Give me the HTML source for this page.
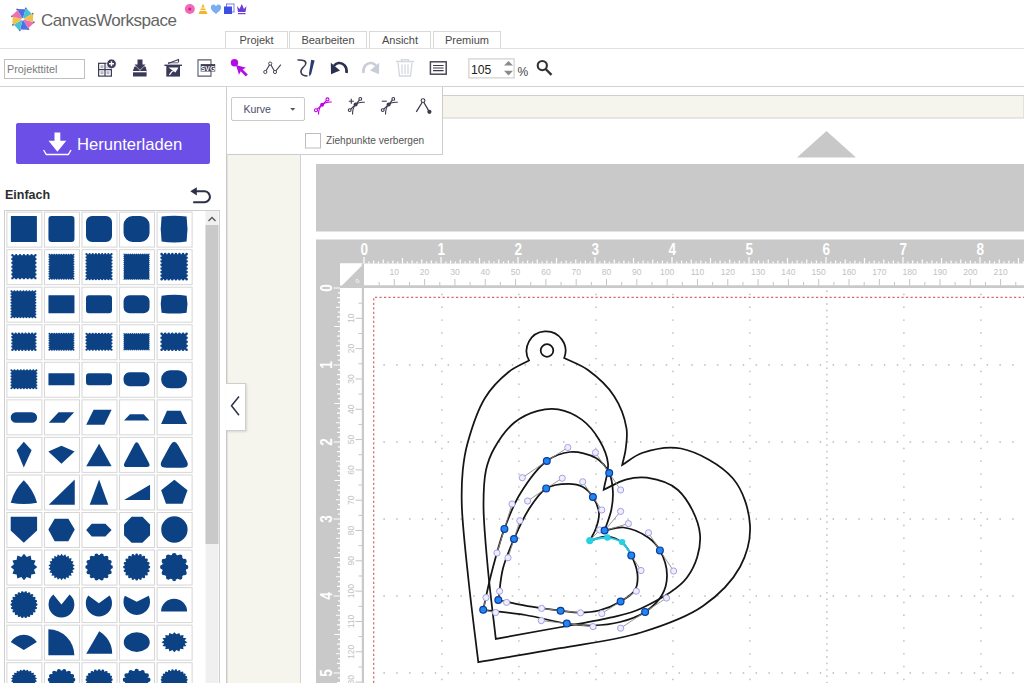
<!DOCTYPE html>
<html><head><meta charset="utf-8">
<style>
*{margin:0;padding:0;box-sizing:border-box}
html,body{width:1024px;height:683px;overflow:hidden;background:#fff;font-family:"Liberation Sans",sans-serif;position:relative}
.a{position:absolute}
.tab{position:absolute;top:31px;height:18px;border:1px solid #d9d9d9;border-bottom:none;background:#fff;font-size:11px;color:#4a4a4a;text-align:center;line-height:16.5px}
.t{position:absolute;white-space:nowrap}
</style></head><body>
<svg class="a" style="left:0;top:0" width="1024" height="683" viewBox="0 0 1024 683">
<rect x="227" y="87" width="797" height="596" fill="#fff"/>
<rect x="227" y="95.5" width="797" height="590" fill="#f6f5ed" stroke="#cfcfcf" stroke-width="1"/>
<rect x="300.5" y="118" width="724" height="566" fill="#fff" stroke="#d2d2d2" stroke-width="1"/>
<polygon points="797,157.5 826.5,131 856,157.5" fill="#c8c8c8"/>
<rect x="316" y="164" width="708" height="67.5" fill="#c9c9c9"/>
<rect x="316" y="239.5" width="708" height="444" fill="#c9c9c9"/>
<rect x="340" y="263.5" width="684" height="22" fill="#fff"/>
<rect x="340" y="263.5" width="22" height="420" fill="#fff"/>
<polygon points="340,287.5 364,263.5 364,287.5" fill="#c9c9c9"/>
<rect x="364" y="288" width="660" height="395" fill="#fff"/>
<path d="M364.00 257.00V263.5M368.81 261.50V263.5M373.62 260.50V263.5M378.44 261.50V263.5M383.25 259.50V263.5M388.06 261.50V263.5M392.88 260.50V263.5M397.69 261.50V263.5M402.50 258.00V263.5M407.31 261.50V263.5M412.12 260.50V263.5M416.94 261.50V263.5M421.75 259.50V263.5M426.56 261.50V263.5M431.38 260.50V263.5M436.19 261.50V263.5M441.00 257.00V263.5M445.81 261.50V263.5M450.62 260.50V263.5M455.44 261.50V263.5M460.25 259.50V263.5M465.06 261.50V263.5M469.88 260.50V263.5M474.69 261.50V263.5M479.50 258.00V263.5M484.31 261.50V263.5M489.12 260.50V263.5M493.94 261.50V263.5M498.75 259.50V263.5M503.56 261.50V263.5M508.38 260.50V263.5M513.19 261.50V263.5M518.00 257.00V263.5M522.81 261.50V263.5M527.62 260.50V263.5M532.44 261.50V263.5M537.25 259.50V263.5M542.06 261.50V263.5M546.88 260.50V263.5M551.69 261.50V263.5M556.50 258.00V263.5M561.31 261.50V263.5M566.12 260.50V263.5M570.94 261.50V263.5M575.75 259.50V263.5M580.56 261.50V263.5M585.38 260.50V263.5M590.19 261.50V263.5M595.00 257.00V263.5M599.81 261.50V263.5M604.62 260.50V263.5M609.44 261.50V263.5M614.25 259.50V263.5M619.06 261.50V263.5M623.88 260.50V263.5M628.69 261.50V263.5M633.50 258.00V263.5M638.31 261.50V263.5M643.12 260.50V263.5M647.94 261.50V263.5M652.75 259.50V263.5M657.56 261.50V263.5M662.38 260.50V263.5M667.19 261.50V263.5M672.00 257.00V263.5M676.81 261.50V263.5M681.62 260.50V263.5M686.44 261.50V263.5M691.25 259.50V263.5M696.06 261.50V263.5M700.88 260.50V263.5M705.69 261.50V263.5M710.50 258.00V263.5M715.31 261.50V263.5M720.12 260.50V263.5M724.94 261.50V263.5M729.75 259.50V263.5M734.56 261.50V263.5M739.38 260.50V263.5M744.19 261.50V263.5M749.00 257.00V263.5M753.81 261.50V263.5M758.62 260.50V263.5M763.44 261.50V263.5M768.25 259.50V263.5M773.06 261.50V263.5M777.88 260.50V263.5M782.69 261.50V263.5M787.50 258.00V263.5M792.31 261.50V263.5M797.12 260.50V263.5M801.94 261.50V263.5M806.75 259.50V263.5M811.56 261.50V263.5M816.38 260.50V263.5M821.19 261.50V263.5M826.00 257.00V263.5M830.81 261.50V263.5M835.62 260.50V263.5M840.44 261.50V263.5M845.25 259.50V263.5M850.06 261.50V263.5M854.88 260.50V263.5M859.69 261.50V263.5M864.50 258.00V263.5M869.31 261.50V263.5M874.12 260.50V263.5M878.94 261.50V263.5M883.75 259.50V263.5M888.56 261.50V263.5M893.38 260.50V263.5M898.19 261.50V263.5M903.00 257.00V263.5M907.81 261.50V263.5M912.62 260.50V263.5M917.44 261.50V263.5M922.25 259.50V263.5M927.06 261.50V263.5M931.88 260.50V263.5M936.69 261.50V263.5M941.50 258.00V263.5M946.31 261.50V263.5M951.12 260.50V263.5M955.94 261.50V263.5M960.75 259.50V263.5M965.56 261.50V263.5M970.38 260.50V263.5M975.19 261.50V263.5M980.00 257.00V263.5M984.81 261.50V263.5M989.62 260.50V263.5M994.44 261.50V263.5M999.25 259.50V263.5M1004.06 261.50V263.5M1008.88 260.50V263.5M1013.69 261.50V263.5M1018.50 258.00V263.5M1023.31 261.50V263.5M333.50 288.00H340M338.00 292.81H340M337.00 297.62H340M338.00 302.44H340M336.00 307.25H340M338.00 312.06H340M337.00 316.88H340M338.00 321.69H340M334.50 326.50H340M338.00 331.31H340M337.00 336.12H340M338.00 340.94H340M336.00 345.75H340M338.00 350.56H340M337.00 355.38H340M338.00 360.19H340M333.50 365.00H340M338.00 369.81H340M337.00 374.62H340M338.00 379.44H340M336.00 384.25H340M338.00 389.06H340M337.00 393.88H340M338.00 398.69H340M334.50 403.50H340M338.00 408.31H340M337.00 413.12H340M338.00 417.94H340M336.00 422.75H340M338.00 427.56H340M337.00 432.38H340M338.00 437.19H340M333.50 442.00H340M338.00 446.81H340M337.00 451.62H340M338.00 456.44H340M336.00 461.25H340M338.00 466.06H340M337.00 470.88H340M338.00 475.69H340M334.50 480.50H340M338.00 485.31H340M337.00 490.12H340M338.00 494.94H340M336.00 499.75H340M338.00 504.56H340M337.00 509.38H340M338.00 514.19H340M333.50 519.00H340M338.00 523.81H340M337.00 528.62H340M338.00 533.44H340M336.00 538.25H340M338.00 543.06H340M337.00 547.88H340M338.00 552.69H340M334.50 557.50H340M338.00 562.31H340M337.00 567.12H340M338.00 571.94H340M336.00 576.75H340M338.00 581.56H340M337.00 586.38H340M338.00 591.19H340M333.50 596.00H340M338.00 600.81H340M337.00 605.62H340M338.00 610.44H340M336.00 615.25H340M338.00 620.06H340M337.00 624.88H340M338.00 629.69H340M334.50 634.50H340M338.00 639.31H340M337.00 644.12H340M338.00 648.94H340M336.00 653.75H340M338.00 658.56H340M337.00 663.38H340M338.00 668.19H340M333.50 673.00H340M338.00 677.81H340M337.00 682.62H340" stroke="#fff" stroke-width="1.2" fill="none"/>
<text transform="translate(364.3 254.8) scale(0.86 1)" font-size="15.8" font-weight="bold" fill="#fff" text-anchor="middle" font-family="Liberation Sans">0</text>
<text transform="translate(441.3 254.8) scale(0.86 1)" font-size="15.8" font-weight="bold" fill="#fff" text-anchor="middle" font-family="Liberation Sans">1</text>
<text transform="translate(518.3 254.8) scale(0.86 1)" font-size="15.8" font-weight="bold" fill="#fff" text-anchor="middle" font-family="Liberation Sans">2</text>
<text transform="translate(595.3 254.8) scale(0.86 1)" font-size="15.8" font-weight="bold" fill="#fff" text-anchor="middle" font-family="Liberation Sans">3</text>
<text transform="translate(672.3 254.8) scale(0.86 1)" font-size="15.8" font-weight="bold" fill="#fff" text-anchor="middle" font-family="Liberation Sans">4</text>
<text transform="translate(749.3 254.8) scale(0.86 1)" font-size="15.8" font-weight="bold" fill="#fff" text-anchor="middle" font-family="Liberation Sans">5</text>
<text transform="translate(826.3 254.8) scale(0.86 1)" font-size="15.8" font-weight="bold" fill="#fff" text-anchor="middle" font-family="Liberation Sans">6</text>
<text transform="translate(903.3 254.8) scale(0.86 1)" font-size="15.8" font-weight="bold" fill="#fff" text-anchor="middle" font-family="Liberation Sans">7</text>
<text transform="translate(980.3 254.8) scale(0.86 1)" font-size="15.8" font-weight="bold" fill="#fff" text-anchor="middle" font-family="Liberation Sans">8</text>
<text transform="translate(331.6 288.0) rotate(-90) scale(0.86 1)" font-size="15.8" font-weight="bold" fill="#fff" text-anchor="middle" font-family="Liberation Sans">0</text>
<text transform="translate(331.6 365.0) rotate(-90) scale(0.86 1)" font-size="15.8" font-weight="bold" fill="#fff" text-anchor="middle" font-family="Liberation Sans">1</text>
<text transform="translate(331.6 442.0) rotate(-90) scale(0.86 1)" font-size="15.8" font-weight="bold" fill="#fff" text-anchor="middle" font-family="Liberation Sans">2</text>
<text transform="translate(331.6 519.0) rotate(-90) scale(0.86 1)" font-size="15.8" font-weight="bold" fill="#fff" text-anchor="middle" font-family="Liberation Sans">3</text>
<text transform="translate(331.6 596.0) rotate(-90) scale(0.86 1)" font-size="15.8" font-weight="bold" fill="#fff" text-anchor="middle" font-family="Liberation Sans">4</text>
<text transform="translate(331.6 673.0) rotate(-90) scale(0.86 1)" font-size="15.8" font-weight="bold" fill="#fff" text-anchor="middle" font-family="Liberation Sans">5</text>
<path d="M379.16 282.00V285.5M394.31 279.00V285.5M409.47 282.00V285.5M424.63 279.00V285.5M439.79 282.00V285.5M454.94 279.00V285.5M470.10 282.00V285.5M485.26 279.00V285.5M500.42 282.00V285.5M515.57 279.00V285.5M530.73 282.00V285.5M545.89 279.00V285.5M561.05 282.00V285.5M576.20 279.00V285.5M591.36 282.00V285.5M606.52 279.00V285.5M621.68 282.00V285.5M636.83 279.00V285.5M651.99 282.00V285.5M667.15 279.00V285.5M682.31 282.00V285.5M697.46 279.00V285.5M712.62 282.00V285.5M727.78 279.00V285.5M742.94 282.00V285.5M758.09 279.00V285.5M773.25 282.00V285.5M788.41 279.00V285.5M803.57 282.00V285.5M818.72 279.00V285.5M833.88 282.00V285.5M849.04 279.00V285.5M864.20 282.00V285.5M879.35 279.00V285.5M894.51 282.00V285.5M909.67 279.00V285.5M924.83 282.00V285.5M939.98 279.00V285.5M955.14 282.00V285.5M970.30 279.00V285.5M985.46 282.00V285.5M1000.61 279.00V285.5M1015.77 282.00V285.5M358.50 303.16H362M355.50 318.31H362M358.50 333.47H362M355.50 348.63H362M358.50 363.79H362M355.50 378.94H362M358.50 394.10H362M355.50 409.26H362M358.50 424.42H362M355.50 439.57H362M358.50 454.73H362M355.50 469.89H362M358.50 485.05H362M355.50 500.20H362M358.50 515.36H362M355.50 530.52H362M358.50 545.68H362M355.50 560.83H362M358.50 575.99H362M355.50 591.15H362M358.50 606.31H362M355.50 621.46H362M358.50 636.62H362M355.50 651.78H362M358.50 666.94H362M355.50 682.09H362" stroke="#c4c4c4" stroke-width="1" fill="none"/>
<text x="394.3" y="274.6" font-size="8.5" fill="#c2c2c2" text-anchor="middle" font-family="Liberation Sans">10</text>
<text x="424.6" y="274.6" font-size="8.5" fill="#c2c2c2" text-anchor="middle" font-family="Liberation Sans">20</text>
<text x="454.9" y="274.6" font-size="8.5" fill="#c2c2c2" text-anchor="middle" font-family="Liberation Sans">30</text>
<text x="485.3" y="274.6" font-size="8.5" fill="#c2c2c2" text-anchor="middle" font-family="Liberation Sans">40</text>
<text x="515.6" y="274.6" font-size="8.5" fill="#c2c2c2" text-anchor="middle" font-family="Liberation Sans">50</text>
<text x="545.9" y="274.6" font-size="8.5" fill="#c2c2c2" text-anchor="middle" font-family="Liberation Sans">60</text>
<text x="576.2" y="274.6" font-size="8.5" fill="#c2c2c2" text-anchor="middle" font-family="Liberation Sans">70</text>
<text x="606.5" y="274.6" font-size="8.5" fill="#c2c2c2" text-anchor="middle" font-family="Liberation Sans">80</text>
<text x="636.8" y="274.6" font-size="8.5" fill="#c2c2c2" text-anchor="middle" font-family="Liberation Sans">90</text>
<text x="667.1" y="274.6" font-size="8.5" fill="#c2c2c2" text-anchor="middle" font-family="Liberation Sans">100</text>
<text x="697.5" y="274.6" font-size="8.5" fill="#c2c2c2" text-anchor="middle" font-family="Liberation Sans">110</text>
<text x="727.8" y="274.6" font-size="8.5" fill="#c2c2c2" text-anchor="middle" font-family="Liberation Sans">120</text>
<text x="758.1" y="274.6" font-size="8.5" fill="#c2c2c2" text-anchor="middle" font-family="Liberation Sans">130</text>
<text x="788.4" y="274.6" font-size="8.5" fill="#c2c2c2" text-anchor="middle" font-family="Liberation Sans">140</text>
<text x="818.7" y="274.6" font-size="8.5" fill="#c2c2c2" text-anchor="middle" font-family="Liberation Sans">150</text>
<text x="849.0" y="274.6" font-size="8.5" fill="#c2c2c2" text-anchor="middle" font-family="Liberation Sans">160</text>
<text x="879.4" y="274.6" font-size="8.5" fill="#c2c2c2" text-anchor="middle" font-family="Liberation Sans">170</text>
<text x="909.7" y="274.6" font-size="8.5" fill="#c2c2c2" text-anchor="middle" font-family="Liberation Sans">180</text>
<text x="940.0" y="274.6" font-size="8.5" fill="#c2c2c2" text-anchor="middle" font-family="Liberation Sans">190</text>
<text x="970.3" y="274.6" font-size="8.5" fill="#c2c2c2" text-anchor="middle" font-family="Liberation Sans">200</text>
<text x="1000.6" y="274.6" font-size="8.5" fill="#c2c2c2" text-anchor="middle" font-family="Liberation Sans">210</text>
<text x="1030.9" y="274.6" font-size="8.5" fill="#c2c2c2" text-anchor="middle" font-family="Liberation Sans">220</text>
<text transform="translate(353.6 318.3) rotate(-90)" font-size="8.5" fill="#c2c2c2" text-anchor="middle" font-family="Liberation Sans">10</text>
<text transform="translate(353.6 348.6) rotate(-90)" font-size="8.5" fill="#c2c2c2" text-anchor="middle" font-family="Liberation Sans">20</text>
<text transform="translate(353.6 378.9) rotate(-90)" font-size="8.5" fill="#c2c2c2" text-anchor="middle" font-family="Liberation Sans">30</text>
<text transform="translate(353.6 409.3) rotate(-90)" font-size="8.5" fill="#c2c2c2" text-anchor="middle" font-family="Liberation Sans">40</text>
<text transform="translate(353.6 439.6) rotate(-90)" font-size="8.5" fill="#c2c2c2" text-anchor="middle" font-family="Liberation Sans">50</text>
<text transform="translate(353.6 469.9) rotate(-90)" font-size="8.5" fill="#c2c2c2" text-anchor="middle" font-family="Liberation Sans">60</text>
<text transform="translate(353.6 500.2) rotate(-90)" font-size="8.5" fill="#c2c2c2" text-anchor="middle" font-family="Liberation Sans">70</text>
<text transform="translate(353.6 530.5) rotate(-90)" font-size="8.5" fill="#c2c2c2" text-anchor="middle" font-family="Liberation Sans">80</text>
<text transform="translate(353.6 560.8) rotate(-90)" font-size="8.5" fill="#c2c2c2" text-anchor="middle" font-family="Liberation Sans">90</text>
<text transform="translate(353.6 591.1) rotate(-90)" font-size="8.5" fill="#c2c2c2" text-anchor="middle" font-family="Liberation Sans">100</text>
<text transform="translate(353.6 621.5) rotate(-90)" font-size="8.5" fill="#c2c2c2" text-anchor="middle" font-family="Liberation Sans">110</text>
<text transform="translate(353.6 651.8) rotate(-90)" font-size="8.5" fill="#c2c2c2" text-anchor="middle" font-family="Liberation Sans">120</text>
<text transform="translate(353.6 682.1) rotate(-90)" font-size="8.5" fill="#c2c2c2" text-anchor="middle" font-family="Liberation Sans">130</text>
<text transform="translate(359 282.5) rotate(-45)" font-size="6" fill="#fff" text-anchor="middle">0</text>
<rect x="340" y="285.5" width="684" height="2.5" fill="#c9c9c9"/>
<rect x="361.8" y="263.5" width="2.2" height="420" fill="#c9c9c9"/>
<g fill="#c6c6c6"><circle cx="441.9" cy="294.4" r="0.9"/><circle cx="441.9" cy="307.2" r="0.9"/><circle cx="441.9" cy="320.1" r="0.9"/><circle cx="441.9" cy="332.9" r="0.9"/><circle cx="441.9" cy="345.8" r="0.9"/><circle cx="441.9" cy="358.6" r="0.9"/><circle cx="441.9" cy="371.4" r="0.9"/><circle cx="441.9" cy="384.2" r="0.9"/><circle cx="441.9" cy="397.1" r="0.9"/><circle cx="441.9" cy="409.9" r="0.9"/><circle cx="441.9" cy="422.8" r="0.9"/><circle cx="441.9" cy="435.6" r="0.9"/><circle cx="441.9" cy="448.4" r="0.9"/><circle cx="441.9" cy="461.2" r="0.9"/><circle cx="441.9" cy="474.1" r="0.9"/><circle cx="441.9" cy="486.9" r="0.9"/><circle cx="441.9" cy="499.8" r="0.9"/><circle cx="441.9" cy="512.6" r="0.9"/><circle cx="441.9" cy="525.4" r="0.9"/><circle cx="441.9" cy="538.2" r="0.9"/><circle cx="441.9" cy="551.1" r="0.9"/><circle cx="441.9" cy="563.9" r="0.9"/><circle cx="441.9" cy="576.8" r="0.9"/><circle cx="441.9" cy="589.6" r="0.9"/><circle cx="441.9" cy="602.4" r="0.9"/><circle cx="441.9" cy="615.2" r="0.9"/><circle cx="441.9" cy="628.1" r="0.9"/><circle cx="441.9" cy="640.9" r="0.9"/><circle cx="441.9" cy="653.8" r="0.9"/><circle cx="441.9" cy="666.6" r="0.9"/><circle cx="441.9" cy="679.4" r="0.9"/><circle cx="518.9" cy="294.4" r="0.9"/><circle cx="518.9" cy="307.2" r="0.9"/><circle cx="518.9" cy="320.1" r="0.9"/><circle cx="518.9" cy="332.9" r="0.9"/><circle cx="518.9" cy="345.8" r="0.9"/><circle cx="518.9" cy="358.6" r="0.9"/><circle cx="518.9" cy="371.4" r="0.9"/><circle cx="518.9" cy="384.2" r="0.9"/><circle cx="518.9" cy="397.1" r="0.9"/><circle cx="518.9" cy="409.9" r="0.9"/><circle cx="518.9" cy="422.8" r="0.9"/><circle cx="518.9" cy="435.6" r="0.9"/><circle cx="518.9" cy="448.4" r="0.9"/><circle cx="518.9" cy="461.2" r="0.9"/><circle cx="518.9" cy="474.1" r="0.9"/><circle cx="518.9" cy="486.9" r="0.9"/><circle cx="518.9" cy="499.8" r="0.9"/><circle cx="518.9" cy="512.6" r="0.9"/><circle cx="518.9" cy="525.4" r="0.9"/><circle cx="518.9" cy="538.2" r="0.9"/><circle cx="518.9" cy="551.1" r="0.9"/><circle cx="518.9" cy="563.9" r="0.9"/><circle cx="518.9" cy="576.8" r="0.9"/><circle cx="518.9" cy="589.6" r="0.9"/><circle cx="518.9" cy="602.4" r="0.9"/><circle cx="518.9" cy="615.2" r="0.9"/><circle cx="518.9" cy="628.1" r="0.9"/><circle cx="518.9" cy="640.9" r="0.9"/><circle cx="518.9" cy="653.8" r="0.9"/><circle cx="518.9" cy="666.6" r="0.9"/><circle cx="518.9" cy="679.4" r="0.9"/><circle cx="595.9" cy="294.4" r="0.9"/><circle cx="595.9" cy="307.2" r="0.9"/><circle cx="595.9" cy="320.1" r="0.9"/><circle cx="595.9" cy="332.9" r="0.9"/><circle cx="595.9" cy="345.8" r="0.9"/><circle cx="595.9" cy="358.6" r="0.9"/><circle cx="595.9" cy="371.4" r="0.9"/><circle cx="595.9" cy="384.2" r="0.9"/><circle cx="595.9" cy="397.1" r="0.9"/><circle cx="595.9" cy="409.9" r="0.9"/><circle cx="595.9" cy="422.8" r="0.9"/><circle cx="595.9" cy="435.6" r="0.9"/><circle cx="595.9" cy="448.4" r="0.9"/><circle cx="595.9" cy="461.2" r="0.9"/><circle cx="595.9" cy="474.1" r="0.9"/><circle cx="595.9" cy="486.9" r="0.9"/><circle cx="595.9" cy="499.8" r="0.9"/><circle cx="595.9" cy="512.6" r="0.9"/><circle cx="595.9" cy="525.4" r="0.9"/><circle cx="595.9" cy="538.2" r="0.9"/><circle cx="595.9" cy="551.1" r="0.9"/><circle cx="595.9" cy="563.9" r="0.9"/><circle cx="595.9" cy="576.8" r="0.9"/><circle cx="595.9" cy="589.6" r="0.9"/><circle cx="595.9" cy="602.4" r="0.9"/><circle cx="595.9" cy="615.2" r="0.9"/><circle cx="595.9" cy="628.1" r="0.9"/><circle cx="595.9" cy="640.9" r="0.9"/><circle cx="595.9" cy="653.8" r="0.9"/><circle cx="595.9" cy="666.6" r="0.9"/><circle cx="595.9" cy="679.4" r="0.9"/><circle cx="672.9" cy="294.4" r="0.9"/><circle cx="672.9" cy="307.2" r="0.9"/><circle cx="672.9" cy="320.1" r="0.9"/><circle cx="672.9" cy="332.9" r="0.9"/><circle cx="672.9" cy="345.8" r="0.9"/><circle cx="672.9" cy="358.6" r="0.9"/><circle cx="672.9" cy="371.4" r="0.9"/><circle cx="672.9" cy="384.2" r="0.9"/><circle cx="672.9" cy="397.1" r="0.9"/><circle cx="672.9" cy="409.9" r="0.9"/><circle cx="672.9" cy="422.8" r="0.9"/><circle cx="672.9" cy="435.6" r="0.9"/><circle cx="672.9" cy="448.4" r="0.9"/><circle cx="672.9" cy="461.2" r="0.9"/><circle cx="672.9" cy="474.1" r="0.9"/><circle cx="672.9" cy="486.9" r="0.9"/><circle cx="672.9" cy="499.8" r="0.9"/><circle cx="672.9" cy="512.6" r="0.9"/><circle cx="672.9" cy="525.4" r="0.9"/><circle cx="672.9" cy="538.2" r="0.9"/><circle cx="672.9" cy="551.1" r="0.9"/><circle cx="672.9" cy="563.9" r="0.9"/><circle cx="672.9" cy="576.8" r="0.9"/><circle cx="672.9" cy="589.6" r="0.9"/><circle cx="672.9" cy="602.4" r="0.9"/><circle cx="672.9" cy="615.2" r="0.9"/><circle cx="672.9" cy="628.1" r="0.9"/><circle cx="672.9" cy="640.9" r="0.9"/><circle cx="672.9" cy="653.8" r="0.9"/><circle cx="672.9" cy="666.6" r="0.9"/><circle cx="672.9" cy="679.4" r="0.9"/><circle cx="749.9" cy="294.4" r="0.9"/><circle cx="749.9" cy="307.2" r="0.9"/><circle cx="749.9" cy="320.1" r="0.9"/><circle cx="749.9" cy="332.9" r="0.9"/><circle cx="749.9" cy="345.8" r="0.9"/><circle cx="749.9" cy="358.6" r="0.9"/><circle cx="749.9" cy="371.4" r="0.9"/><circle cx="749.9" cy="384.2" r="0.9"/><circle cx="749.9" cy="397.1" r="0.9"/><circle cx="749.9" cy="409.9" r="0.9"/><circle cx="749.9" cy="422.8" r="0.9"/><circle cx="749.9" cy="435.6" r="0.9"/><circle cx="749.9" cy="448.4" r="0.9"/><circle cx="749.9" cy="461.2" r="0.9"/><circle cx="749.9" cy="474.1" r="0.9"/><circle cx="749.9" cy="486.9" r="0.9"/><circle cx="749.9" cy="499.8" r="0.9"/><circle cx="749.9" cy="512.6" r="0.9"/><circle cx="749.9" cy="525.4" r="0.9"/><circle cx="749.9" cy="538.2" r="0.9"/><circle cx="749.9" cy="551.1" r="0.9"/><circle cx="749.9" cy="563.9" r="0.9"/><circle cx="749.9" cy="576.8" r="0.9"/><circle cx="749.9" cy="589.6" r="0.9"/><circle cx="749.9" cy="602.4" r="0.9"/><circle cx="749.9" cy="615.2" r="0.9"/><circle cx="749.9" cy="628.1" r="0.9"/><circle cx="749.9" cy="640.9" r="0.9"/><circle cx="749.9" cy="653.8" r="0.9"/><circle cx="749.9" cy="666.6" r="0.9"/><circle cx="749.9" cy="679.4" r="0.9"/><circle cx="826.9" cy="291.2" r="0.9"/><circle cx="826.9" cy="297.6" r="0.9"/><circle cx="826.9" cy="304.0" r="0.9"/><circle cx="826.9" cy="310.5" r="0.9"/><circle cx="826.9" cy="316.9" r="0.9"/><circle cx="826.9" cy="323.3" r="0.9"/><circle cx="826.9" cy="329.7" r="0.9"/><circle cx="826.9" cy="336.1" r="0.9"/><circle cx="826.9" cy="342.5" r="0.9"/><circle cx="826.9" cy="349.0" r="0.9"/><circle cx="826.9" cy="355.4" r="0.9"/><circle cx="826.9" cy="361.8" r="0.9"/><circle cx="826.9" cy="368.2" r="0.9"/><circle cx="826.9" cy="374.6" r="0.9"/><circle cx="826.9" cy="381.0" r="0.9"/><circle cx="826.9" cy="387.5" r="0.9"/><circle cx="826.9" cy="393.9" r="0.9"/><circle cx="826.9" cy="400.3" r="0.9"/><circle cx="826.9" cy="406.7" r="0.9"/><circle cx="826.9" cy="413.1" r="0.9"/><circle cx="826.9" cy="419.5" r="0.9"/><circle cx="826.9" cy="426.0" r="0.9"/><circle cx="826.9" cy="432.4" r="0.9"/><circle cx="826.9" cy="438.8" r="0.9"/><circle cx="826.9" cy="445.2" r="0.9"/><circle cx="826.9" cy="451.6" r="0.9"/><circle cx="826.9" cy="458.0" r="0.9"/><circle cx="826.9" cy="464.5" r="0.9"/><circle cx="826.9" cy="470.9" r="0.9"/><circle cx="826.9" cy="477.3" r="0.9"/><circle cx="826.9" cy="483.7" r="0.9"/><circle cx="826.9" cy="490.1" r="0.9"/><circle cx="826.9" cy="496.5" r="0.9"/><circle cx="826.9" cy="503.0" r="0.9"/><circle cx="826.9" cy="509.4" r="0.9"/><circle cx="826.9" cy="515.8" r="0.9"/><circle cx="826.9" cy="522.2" r="0.9"/><circle cx="826.9" cy="528.6" r="0.9"/><circle cx="826.9" cy="535.0" r="0.9"/><circle cx="826.9" cy="541.5" r="0.9"/><circle cx="826.9" cy="547.9" r="0.9"/><circle cx="826.9" cy="554.3" r="0.9"/><circle cx="826.9" cy="560.7" r="0.9"/><circle cx="826.9" cy="567.1" r="0.9"/><circle cx="826.9" cy="573.5" r="0.9"/><circle cx="826.9" cy="580.0" r="0.9"/><circle cx="826.9" cy="586.4" r="0.9"/><circle cx="826.9" cy="592.8" r="0.9"/><circle cx="826.9" cy="599.2" r="0.9"/><circle cx="826.9" cy="605.6" r="0.9"/><circle cx="826.9" cy="612.0" r="0.9"/><circle cx="826.9" cy="618.5" r="0.9"/><circle cx="826.9" cy="624.9" r="0.9"/><circle cx="826.9" cy="631.3" r="0.9"/><circle cx="826.9" cy="637.7" r="0.9"/><circle cx="826.9" cy="644.1" r="0.9"/><circle cx="826.9" cy="650.5" r="0.9"/><circle cx="826.9" cy="657.0" r="0.9"/><circle cx="826.9" cy="663.4" r="0.9"/><circle cx="826.9" cy="669.8" r="0.9"/><circle cx="826.9" cy="676.2" r="0.9"/><circle cx="826.9" cy="682.6" r="0.9"/><circle cx="903.9" cy="294.4" r="0.9"/><circle cx="903.9" cy="307.2" r="0.9"/><circle cx="903.9" cy="320.1" r="0.9"/><circle cx="903.9" cy="332.9" r="0.9"/><circle cx="903.9" cy="345.8" r="0.9"/><circle cx="903.9" cy="358.6" r="0.9"/><circle cx="903.9" cy="371.4" r="0.9"/><circle cx="903.9" cy="384.2" r="0.9"/><circle cx="903.9" cy="397.1" r="0.9"/><circle cx="903.9" cy="409.9" r="0.9"/><circle cx="903.9" cy="422.8" r="0.9"/><circle cx="903.9" cy="435.6" r="0.9"/><circle cx="903.9" cy="448.4" r="0.9"/><circle cx="903.9" cy="461.2" r="0.9"/><circle cx="903.9" cy="474.1" r="0.9"/><circle cx="903.9" cy="486.9" r="0.9"/><circle cx="903.9" cy="499.8" r="0.9"/><circle cx="903.9" cy="512.6" r="0.9"/><circle cx="903.9" cy="525.4" r="0.9"/><circle cx="903.9" cy="538.2" r="0.9"/><circle cx="903.9" cy="551.1" r="0.9"/><circle cx="903.9" cy="563.9" r="0.9"/><circle cx="903.9" cy="576.8" r="0.9"/><circle cx="903.9" cy="589.6" r="0.9"/><circle cx="903.9" cy="602.4" r="0.9"/><circle cx="903.9" cy="615.2" r="0.9"/><circle cx="903.9" cy="628.1" r="0.9"/><circle cx="903.9" cy="640.9" r="0.9"/><circle cx="903.9" cy="653.8" r="0.9"/><circle cx="903.9" cy="666.6" r="0.9"/><circle cx="903.9" cy="679.4" r="0.9"/><circle cx="980.9" cy="294.4" r="0.9"/><circle cx="980.9" cy="307.2" r="0.9"/><circle cx="980.9" cy="320.1" r="0.9"/><circle cx="980.9" cy="332.9" r="0.9"/><circle cx="980.9" cy="345.8" r="0.9"/><circle cx="980.9" cy="358.6" r="0.9"/><circle cx="980.9" cy="371.4" r="0.9"/><circle cx="980.9" cy="384.2" r="0.9"/><circle cx="980.9" cy="397.1" r="0.9"/><circle cx="980.9" cy="409.9" r="0.9"/><circle cx="980.9" cy="422.8" r="0.9"/><circle cx="980.9" cy="435.6" r="0.9"/><circle cx="980.9" cy="448.4" r="0.9"/><circle cx="980.9" cy="461.2" r="0.9"/><circle cx="980.9" cy="474.1" r="0.9"/><circle cx="980.9" cy="486.9" r="0.9"/><circle cx="980.9" cy="499.8" r="0.9"/><circle cx="980.9" cy="512.6" r="0.9"/><circle cx="980.9" cy="525.4" r="0.9"/><circle cx="980.9" cy="538.2" r="0.9"/><circle cx="980.9" cy="551.1" r="0.9"/><circle cx="980.9" cy="563.9" r="0.9"/><circle cx="980.9" cy="576.8" r="0.9"/><circle cx="980.9" cy="589.6" r="0.9"/><circle cx="980.9" cy="602.4" r="0.9"/><circle cx="980.9" cy="615.2" r="0.9"/><circle cx="980.9" cy="628.1" r="0.9"/><circle cx="980.9" cy="640.9" r="0.9"/><circle cx="980.9" cy="653.8" r="0.9"/><circle cx="980.9" cy="666.6" r="0.9"/><circle cx="980.9" cy="679.4" r="0.9"/><circle cx="384.1" cy="365.0" r="0.9"/><circle cx="397.0" cy="365.0" r="0.9"/><circle cx="409.8" cy="365.0" r="0.9"/><circle cx="422.6" cy="365.0" r="0.9"/><circle cx="435.5" cy="365.0" r="0.9"/><circle cx="448.3" cy="365.0" r="0.9"/><circle cx="461.1" cy="365.0" r="0.9"/><circle cx="474.0" cy="365.0" r="0.9"/><circle cx="486.8" cy="365.0" r="0.9"/><circle cx="499.6" cy="365.0" r="0.9"/><circle cx="512.5" cy="365.0" r="0.9"/><circle cx="525.3" cy="365.0" r="0.9"/><circle cx="538.1" cy="365.0" r="0.9"/><circle cx="551.0" cy="365.0" r="0.9"/><circle cx="563.8" cy="365.0" r="0.9"/><circle cx="576.6" cy="365.0" r="0.9"/><circle cx="589.5" cy="365.0" r="0.9"/><circle cx="602.3" cy="365.0" r="0.9"/><circle cx="615.1" cy="365.0" r="0.9"/><circle cx="628.0" cy="365.0" r="0.9"/><circle cx="640.8" cy="365.0" r="0.9"/><circle cx="653.6" cy="365.0" r="0.9"/><circle cx="666.5" cy="365.0" r="0.9"/><circle cx="679.3" cy="365.0" r="0.9"/><circle cx="692.1" cy="365.0" r="0.9"/><circle cx="705.0" cy="365.0" r="0.9"/><circle cx="717.8" cy="365.0" r="0.9"/><circle cx="730.6" cy="365.0" r="0.9"/><circle cx="743.5" cy="365.0" r="0.9"/><circle cx="756.3" cy="365.0" r="0.9"/><circle cx="769.1" cy="365.0" r="0.9"/><circle cx="782.0" cy="365.0" r="0.9"/><circle cx="794.8" cy="365.0" r="0.9"/><circle cx="807.6" cy="365.0" r="0.9"/><circle cx="820.5" cy="365.0" r="0.9"/><circle cx="833.3" cy="365.0" r="0.9"/><circle cx="846.1" cy="365.0" r="0.9"/><circle cx="859.0" cy="365.0" r="0.9"/><circle cx="871.8" cy="365.0" r="0.9"/><circle cx="884.6" cy="365.0" r="0.9"/><circle cx="897.5" cy="365.0" r="0.9"/><circle cx="910.3" cy="365.0" r="0.9"/><circle cx="923.1" cy="365.0" r="0.9"/><circle cx="936.0" cy="365.0" r="0.9"/><circle cx="948.8" cy="365.0" r="0.9"/><circle cx="961.6" cy="365.0" r="0.9"/><circle cx="974.5" cy="365.0" r="0.9"/><circle cx="987.3" cy="365.0" r="0.9"/><circle cx="1000.1" cy="365.0" r="0.9"/><circle cx="1013.0" cy="365.0" r="0.9"/><circle cx="384.1" cy="442.0" r="0.9"/><circle cx="397.0" cy="442.0" r="0.9"/><circle cx="409.8" cy="442.0" r="0.9"/><circle cx="422.6" cy="442.0" r="0.9"/><circle cx="435.5" cy="442.0" r="0.9"/><circle cx="448.3" cy="442.0" r="0.9"/><circle cx="461.1" cy="442.0" r="0.9"/><circle cx="474.0" cy="442.0" r="0.9"/><circle cx="486.8" cy="442.0" r="0.9"/><circle cx="499.6" cy="442.0" r="0.9"/><circle cx="512.5" cy="442.0" r="0.9"/><circle cx="525.3" cy="442.0" r="0.9"/><circle cx="538.1" cy="442.0" r="0.9"/><circle cx="551.0" cy="442.0" r="0.9"/><circle cx="563.8" cy="442.0" r="0.9"/><circle cx="576.6" cy="442.0" r="0.9"/><circle cx="589.5" cy="442.0" r="0.9"/><circle cx="602.3" cy="442.0" r="0.9"/><circle cx="615.1" cy="442.0" r="0.9"/><circle cx="628.0" cy="442.0" r="0.9"/><circle cx="640.8" cy="442.0" r="0.9"/><circle cx="653.6" cy="442.0" r="0.9"/><circle cx="666.5" cy="442.0" r="0.9"/><circle cx="679.3" cy="442.0" r="0.9"/><circle cx="692.1" cy="442.0" r="0.9"/><circle cx="705.0" cy="442.0" r="0.9"/><circle cx="717.8" cy="442.0" r="0.9"/><circle cx="730.6" cy="442.0" r="0.9"/><circle cx="743.5" cy="442.0" r="0.9"/><circle cx="756.3" cy="442.0" r="0.9"/><circle cx="769.1" cy="442.0" r="0.9"/><circle cx="782.0" cy="442.0" r="0.9"/><circle cx="794.8" cy="442.0" r="0.9"/><circle cx="807.6" cy="442.0" r="0.9"/><circle cx="820.5" cy="442.0" r="0.9"/><circle cx="833.3" cy="442.0" r="0.9"/><circle cx="846.1" cy="442.0" r="0.9"/><circle cx="859.0" cy="442.0" r="0.9"/><circle cx="871.8" cy="442.0" r="0.9"/><circle cx="884.6" cy="442.0" r="0.9"/><circle cx="897.5" cy="442.0" r="0.9"/><circle cx="910.3" cy="442.0" r="0.9"/><circle cx="923.1" cy="442.0" r="0.9"/><circle cx="936.0" cy="442.0" r="0.9"/><circle cx="948.8" cy="442.0" r="0.9"/><circle cx="961.6" cy="442.0" r="0.9"/><circle cx="974.5" cy="442.0" r="0.9"/><circle cx="987.3" cy="442.0" r="0.9"/><circle cx="1000.1" cy="442.0" r="0.9"/><circle cx="1013.0" cy="442.0" r="0.9"/><circle cx="384.1" cy="519.0" r="0.9"/><circle cx="397.0" cy="519.0" r="0.9"/><circle cx="409.8" cy="519.0" r="0.9"/><circle cx="422.6" cy="519.0" r="0.9"/><circle cx="435.5" cy="519.0" r="0.9"/><circle cx="448.3" cy="519.0" r="0.9"/><circle cx="461.1" cy="519.0" r="0.9"/><circle cx="474.0" cy="519.0" r="0.9"/><circle cx="486.8" cy="519.0" r="0.9"/><circle cx="499.6" cy="519.0" r="0.9"/><circle cx="512.5" cy="519.0" r="0.9"/><circle cx="525.3" cy="519.0" r="0.9"/><circle cx="538.1" cy="519.0" r="0.9"/><circle cx="551.0" cy="519.0" r="0.9"/><circle cx="563.8" cy="519.0" r="0.9"/><circle cx="576.6" cy="519.0" r="0.9"/><circle cx="589.5" cy="519.0" r="0.9"/><circle cx="602.3" cy="519.0" r="0.9"/><circle cx="615.1" cy="519.0" r="0.9"/><circle cx="628.0" cy="519.0" r="0.9"/><circle cx="640.8" cy="519.0" r="0.9"/><circle cx="653.6" cy="519.0" r="0.9"/><circle cx="666.5" cy="519.0" r="0.9"/><circle cx="679.3" cy="519.0" r="0.9"/><circle cx="692.1" cy="519.0" r="0.9"/><circle cx="705.0" cy="519.0" r="0.9"/><circle cx="717.8" cy="519.0" r="0.9"/><circle cx="730.6" cy="519.0" r="0.9"/><circle cx="743.5" cy="519.0" r="0.9"/><circle cx="756.3" cy="519.0" r="0.9"/><circle cx="769.1" cy="519.0" r="0.9"/><circle cx="782.0" cy="519.0" r="0.9"/><circle cx="794.8" cy="519.0" r="0.9"/><circle cx="807.6" cy="519.0" r="0.9"/><circle cx="820.5" cy="519.0" r="0.9"/><circle cx="833.3" cy="519.0" r="0.9"/><circle cx="846.1" cy="519.0" r="0.9"/><circle cx="859.0" cy="519.0" r="0.9"/><circle cx="871.8" cy="519.0" r="0.9"/><circle cx="884.6" cy="519.0" r="0.9"/><circle cx="897.5" cy="519.0" r="0.9"/><circle cx="910.3" cy="519.0" r="0.9"/><circle cx="923.1" cy="519.0" r="0.9"/><circle cx="936.0" cy="519.0" r="0.9"/><circle cx="948.8" cy="519.0" r="0.9"/><circle cx="961.6" cy="519.0" r="0.9"/><circle cx="974.5" cy="519.0" r="0.9"/><circle cx="987.3" cy="519.0" r="0.9"/><circle cx="1000.1" cy="519.0" r="0.9"/><circle cx="1013.0" cy="519.0" r="0.9"/><circle cx="384.1" cy="596.0" r="0.9"/><circle cx="397.0" cy="596.0" r="0.9"/><circle cx="409.8" cy="596.0" r="0.9"/><circle cx="422.6" cy="596.0" r="0.9"/><circle cx="435.5" cy="596.0" r="0.9"/><circle cx="448.3" cy="596.0" r="0.9"/><circle cx="461.1" cy="596.0" r="0.9"/><circle cx="474.0" cy="596.0" r="0.9"/><circle cx="486.8" cy="596.0" r="0.9"/><circle cx="499.6" cy="596.0" r="0.9"/><circle cx="512.5" cy="596.0" r="0.9"/><circle cx="525.3" cy="596.0" r="0.9"/><circle cx="538.1" cy="596.0" r="0.9"/><circle cx="551.0" cy="596.0" r="0.9"/><circle cx="563.8" cy="596.0" r="0.9"/><circle cx="576.6" cy="596.0" r="0.9"/><circle cx="589.5" cy="596.0" r="0.9"/><circle cx="602.3" cy="596.0" r="0.9"/><circle cx="615.1" cy="596.0" r="0.9"/><circle cx="628.0" cy="596.0" r="0.9"/><circle cx="640.8" cy="596.0" r="0.9"/><circle cx="653.6" cy="596.0" r="0.9"/><circle cx="666.5" cy="596.0" r="0.9"/><circle cx="679.3" cy="596.0" r="0.9"/><circle cx="692.1" cy="596.0" r="0.9"/><circle cx="705.0" cy="596.0" r="0.9"/><circle cx="717.8" cy="596.0" r="0.9"/><circle cx="730.6" cy="596.0" r="0.9"/><circle cx="743.5" cy="596.0" r="0.9"/><circle cx="756.3" cy="596.0" r="0.9"/><circle cx="769.1" cy="596.0" r="0.9"/><circle cx="782.0" cy="596.0" r="0.9"/><circle cx="794.8" cy="596.0" r="0.9"/><circle cx="807.6" cy="596.0" r="0.9"/><circle cx="820.5" cy="596.0" r="0.9"/><circle cx="833.3" cy="596.0" r="0.9"/><circle cx="846.1" cy="596.0" r="0.9"/><circle cx="859.0" cy="596.0" r="0.9"/><circle cx="871.8" cy="596.0" r="0.9"/><circle cx="884.6" cy="596.0" r="0.9"/><circle cx="897.5" cy="596.0" r="0.9"/><circle cx="910.3" cy="596.0" r="0.9"/><circle cx="923.1" cy="596.0" r="0.9"/><circle cx="936.0" cy="596.0" r="0.9"/><circle cx="948.8" cy="596.0" r="0.9"/><circle cx="961.6" cy="596.0" r="0.9"/><circle cx="974.5" cy="596.0" r="0.9"/><circle cx="987.3" cy="596.0" r="0.9"/><circle cx="1000.1" cy="596.0" r="0.9"/><circle cx="1013.0" cy="596.0" r="0.9"/><circle cx="384.1" cy="673.0" r="0.9"/><circle cx="397.0" cy="673.0" r="0.9"/><circle cx="409.8" cy="673.0" r="0.9"/><circle cx="422.6" cy="673.0" r="0.9"/><circle cx="435.5" cy="673.0" r="0.9"/><circle cx="448.3" cy="673.0" r="0.9"/><circle cx="461.1" cy="673.0" r="0.9"/><circle cx="474.0" cy="673.0" r="0.9"/><circle cx="486.8" cy="673.0" r="0.9"/><circle cx="499.6" cy="673.0" r="0.9"/><circle cx="512.5" cy="673.0" r="0.9"/><circle cx="525.3" cy="673.0" r="0.9"/><circle cx="538.1" cy="673.0" r="0.9"/><circle cx="551.0" cy="673.0" r="0.9"/><circle cx="563.8" cy="673.0" r="0.9"/><circle cx="576.6" cy="673.0" r="0.9"/><circle cx="589.5" cy="673.0" r="0.9"/><circle cx="602.3" cy="673.0" r="0.9"/><circle cx="615.1" cy="673.0" r="0.9"/><circle cx="628.0" cy="673.0" r="0.9"/><circle cx="640.8" cy="673.0" r="0.9"/><circle cx="653.6" cy="673.0" r="0.9"/><circle cx="666.5" cy="673.0" r="0.9"/><circle cx="679.3" cy="673.0" r="0.9"/><circle cx="692.1" cy="673.0" r="0.9"/><circle cx="705.0" cy="673.0" r="0.9"/><circle cx="717.8" cy="673.0" r="0.9"/><circle cx="730.6" cy="673.0" r="0.9"/><circle cx="743.5" cy="673.0" r="0.9"/><circle cx="756.3" cy="673.0" r="0.9"/><circle cx="769.1" cy="673.0" r="0.9"/><circle cx="782.0" cy="673.0" r="0.9"/><circle cx="794.8" cy="673.0" r="0.9"/><circle cx="807.6" cy="673.0" r="0.9"/><circle cx="820.5" cy="673.0" r="0.9"/><circle cx="833.3" cy="673.0" r="0.9"/><circle cx="846.1" cy="673.0" r="0.9"/><circle cx="859.0" cy="673.0" r="0.9"/><circle cx="871.8" cy="673.0" r="0.9"/><circle cx="884.6" cy="673.0" r="0.9"/><circle cx="897.5" cy="673.0" r="0.9"/><circle cx="910.3" cy="673.0" r="0.9"/><circle cx="923.1" cy="673.0" r="0.9"/><circle cx="936.0" cy="673.0" r="0.9"/><circle cx="948.8" cy="673.0" r="0.9"/><circle cx="961.6" cy="673.0" r="0.9"/><circle cx="974.5" cy="673.0" r="0.9"/><circle cx="987.3" cy="673.0" r="0.9"/><circle cx="1000.1" cy="673.0" r="0.9"/><circle cx="1013.0" cy="673.0" r="0.9"/></g>
<path d="M373.7 683V297.3H1024" stroke="#d86868" stroke-width="1.2" stroke-dasharray="2.2 2.3" fill="none"/>
<g fill="none" stroke="#151515" stroke-width="1.75" stroke-linejoin="miter">
<path d="M478.3 662.2C475.0 634.8 471.3 606.8 468.5 580.0C465.8 554.4 462.4 525.3 461.8 505.0C461.4 491.2 461.7 480.9 462.8 470.0C463.8 460.4 464.8 453.0 467.6 443.0C471.3 429.7 477.4 410.4 485.0 398.0C491.5 387.4 500.5 378.5 508.6 372.0C515.2 366.7 522.2 364.3 529.0 360.4A19.5 19.5 0 1 1 564.2 358C572.0 361.9 580.0 364.3 587.6 369.8C596.7 376.3 607.5 386.0 614.0 396.0C620.3 405.6 624.9 418.6 626.5 428.3C627.7 435.8 626.5 442.4 625.7 448.8C625.0 454.6 623.4 459.6 622.2 465.0C628.8 461.0 633.9 455.8 642.0 453.0C652.5 449.4 667.5 445.7 681.0 448.5C697.6 451.9 721.5 464.8 733.0 478.5C743.5 491.0 749.1 510.1 750.0 525.4C750.8 539.6 746.9 554.2 740.0 567.0C732.2 581.3 718.2 595.4 703.0 606.0C686.0 617.9 663.4 625.6 641.0 632.5C616.2 640.1 587.1 643.3 560.0 648.2C532.9 653.2 505.5 657.5 478.3 662.2Z"/>
<path d="M495.8 638.9C493.2 615.9 490.1 592.7 488.0 570.0C486.0 548.0 483.5 523.3 483.5 505.0C483.5 491.5 483.8 480.1 486.0 470.0C487.8 461.9 490.0 455.9 494.0 448.8C498.8 440.1 506.5 429.0 514.4 422.5C521.4 416.8 530.0 412.9 537.8 410.8C544.7 408.9 551.4 408.1 558.3 409.3C566.0 410.6 575.0 414.6 581.8 419.6C588.7 424.7 594.9 432.5 599.3 440.0C603.5 447.2 607.2 455.3 608.0 463.5C608.8 471.9 605.1 481.0 603.7 489.8C611.0 486.4 618.3 481.6 625.7 479.6C632.7 477.7 639.3 476.6 646.9 477.7C656.4 479.1 669.6 482.3 678.0 490.0C688.2 499.4 698.8 519.6 700.0 534.6C701.2 548.8 695.8 565.6 687.0 577.5C677.2 590.8 655.3 601.7 641.0 608.5C630.1 613.7 622.0 614.8 610.0 617.7C594.0 621.6 572.0 625.0 553.0 628.5C534.0 632.0 514.9 635.4 495.8 638.9Z"/>
<path d="M483.2 609.8C485.8 598.2 487.8 587.4 491.0 575.0C494.7 560.7 499.2 543.0 504.4 528.9C509.0 516.3 513.2 505.0 520.0 494.0C527.2 482.3 537.2 468.0 546.8 461.0C554.1 455.7 562.0 452.6 570.0 452.0C578.3 451.4 589.3 454.0 596.0 458.0C601.8 461.5 606.4 467.3 609.2 473.0C611.9 478.5 612.6 485.3 612.9 491.5C613.2 497.6 612.6 503.7 611.3 510.0C609.9 516.7 606.8 523.7 604.6 530.5C610.9 529.5 617.0 526.7 623.6 527.5C631.4 528.4 641.9 533.1 648.2 537.5C653.3 541.1 656.9 545.0 659.9 550.4C663.6 557.0 666.9 567.2 667.0 575.0C667.1 582.0 665.4 589.0 662.0 595.0C658.4 601.4 651.8 607.5 645.1 611.9C638.0 616.6 628.7 619.7 620.0 622.0C611.3 624.3 601.9 625.2 593.0 625.5C584.2 625.7 576.5 624.9 566.8 623.6C554.5 621.9 539.2 617.3 525.3 615.0C511.4 612.7 497.2 611.5 483.2 609.8Z"/>
<path d="M498.3 600.0C499.9 589.4 500.4 578.5 503.0 568.3C505.6 558.2 509.8 548.6 514.0 539.0C518.3 529.2 522.8 518.7 528.4 510.0C533.6 501.9 539.1 492.7 546.2 488.4C552.6 484.5 561.7 483.8 568.3 483.8C573.7 483.8 578.9 484.7 583.0 487.0C587.0 489.2 590.3 493.0 592.9 497.0C595.8 501.5 598.5 507.7 599.0 513.0C599.4 518.1 597.6 523.6 596.0 528.3C594.5 532.7 591.9 536.5 589.8 540.6C596.0 539.2 602.6 535.9 608.3 536.5C613.5 537.0 618.8 539.8 622.7 543.0C626.5 546.1 628.9 550.6 631.3 555.4C634.0 560.9 637.0 568.3 637.5 574.4C637.9 579.8 637.6 585.6 635.0 590.0C632.2 594.8 626.1 598.2 620.6 601.5C614.3 605.2 606.1 608.7 599.0 610.5C592.6 612.1 586.4 612.5 580.0 612.5C573.6 612.5 567.7 611.5 560.6 610.7C551.9 609.7 541.5 608.4 531.5 606.7C520.8 604.9 509.4 602.2 498.3 600.0Z"/>
<circle cx="547" cy="350.5" r="6.3"/>
</g>
<path d="M483.2 609.8L486 597.6M483.2 609.8L495.6 612.5M504.4 528.9L497 553M504.4 528.9L512 504M546.8 461L522.3 477.7M546.8 461L567.8 447.5M609.2 473L595.5 452.6M609.2 473L620.6 490M604.6 530.5L620.6 511.4M604.6 530.5L628.4 523.6M659.9 550.4L648.5 532.8M659.9 550.4L673.6 571M645.1 611.9L666.5 598M645.1 611.9L620.6 628.2M566.8 623.6L593 626.6M566.8 623.6L541.3 620.6M498.3 600L499.6 591.2M498.3 600L506.6 602.4M514 539L508 557.8M514 539L519.8 520.7M546.2 488.4L527.6 501M546.2 488.4L562.2 478.2M592.9 497L582.7 481.8M592.9 497L601.8 510M631.3 555.4L641 570.5M620.6 601.5L636.3 591.2M620.6 601.5L601.8 613.5M560.6 610.7L580.5 612.8M560.6 610.7L541.6 608.4M589.8 540.6L599.6 530" stroke="#8c8c8c" stroke-width="0.9" fill="none"/>
<g fill="#eeeefc" stroke="#a3a1e6" stroke-width="1">
<circle cx="486" cy="597.6" r="3.1"/>
<circle cx="495.6" cy="612.5" r="3.1"/>
<circle cx="497" cy="553" r="3.1"/>
<circle cx="512" cy="504" r="3.1"/>
<circle cx="522.3" cy="477.7" r="3.1"/>
<circle cx="567.8" cy="447.5" r="3.1"/>
<circle cx="595.5" cy="452.6" r="3.1"/>
<circle cx="620.6" cy="490" r="3.1"/>
<circle cx="620.6" cy="511.4" r="3.1"/>
<circle cx="628.4" cy="523.6" r="3.1"/>
<circle cx="648.5" cy="532.8" r="3.1"/>
<circle cx="673.6" cy="571" r="3.1"/>
<circle cx="666.5" cy="598" r="3.1"/>
<circle cx="620.6" cy="628.2" r="3.1"/>
<circle cx="593" cy="626.6" r="3.1"/>
<circle cx="541.3" cy="620.6" r="3.1"/>
<circle cx="499.6" cy="591.2" r="3.1"/>
<circle cx="506.6" cy="602.4" r="3.1"/>
<circle cx="508" cy="557.8" r="3.1"/>
<circle cx="519.8" cy="520.7" r="3.1"/>
<circle cx="527.6" cy="501" r="3.1"/>
<circle cx="562.2" cy="478.2" r="3.1"/>
<circle cx="582.7" cy="481.8" r="3.1"/>
<circle cx="601.8" cy="510" r="3.1"/>
<circle cx="641" cy="570.5" r="3.1"/>
<circle cx="636.3" cy="591.2" r="3.1"/>
<circle cx="601.8" cy="613.5" r="3.1"/>
<circle cx="580.5" cy="612.8" r="3.1"/>
<circle cx="541.6" cy="608.4" r="3.1"/>
<circle cx="599.6" cy="530" r="3.1"/>
</g>
<path d="M589.8 540.6C600 536 615 537 622.7 543C627 547 629.5 551 631.3 555.4" stroke="#22c8e0" stroke-width="1.8" fill="none"/>
<path d="M589.8 540.6L607.4 537.5M622.2 542.1L631.3 555.4" stroke="#22c8e0" stroke-width="1" fill="none"/>
<g fill="#28d0e6"><circle cx="589.8" cy="540.6" r="3.6"/><circle cx="607.4" cy="537.5" r="3.2"/><circle cx="622.2" cy="542.1" r="3.2"/></g>
<g fill="#2186ee" stroke="#0b3aa0" stroke-width="1.2">
<circle cx="483.2" cy="609.8" r="3.4"/>
<circle cx="504.4" cy="528.9" r="3.4"/>
<circle cx="546.8" cy="461" r="3.4"/>
<circle cx="609.2" cy="473" r="3.4"/>
<circle cx="604.6" cy="530.5" r="3.4"/>
<circle cx="659.9" cy="550.4" r="3.4"/>
<circle cx="645.1" cy="611.9" r="3.4"/>
<circle cx="566.8" cy="623.6" r="3.4"/>
<circle cx="498.3" cy="600" r="3.4"/>
<circle cx="514" cy="539" r="3.4"/>
<circle cx="546.2" cy="488.4" r="3.4"/>
<circle cx="592.9" cy="497" r="3.4"/>
<circle cx="631.3" cy="555.4" r="3.4"/>
<circle cx="620.6" cy="601.5" r="3.4"/>
<circle cx="560.6" cy="610.7" r="3.4"/>
</g>
</svg>
<svg class="a" style="left:0;top:0" width="227" height="683" viewBox="0 0 227 683">
<rect x="4.5" y="210.5" width="215" height="480" fill="#fff" stroke="#cfcfcf"/>
<rect x="6.90" y="212.10" width="35" height="35" fill="#fff" stroke="#d6d6d6"/>
<path transform="translate(6.40 211.60)" d="M5.0 4.4H30.0A0.5 0.5 0 0 1 30.5 4.9V29.9A0.5 0.5 0 0 1 30.0 30.4H5.0A0.5 0.5 0 0 1 4.5 29.9V4.9A0.5 0.5 0 0 1 5.0 4.4Z" fill="#0c4284"/>
<rect x="44.45" y="212.10" width="35" height="35" fill="#fff" stroke="#d6d6d6"/>
<path transform="translate(43.95 211.60)" d="M7.5 4.4H27.5A3 3 0 0 1 30.5 7.4V27.4A3 3 0 0 1 27.5 30.4H7.5A3 3 0 0 1 4.5 27.4V7.4A3 3 0 0 1 7.5 4.4Z" fill="#0c4284"/>
<rect x="82.00" y="212.10" width="35" height="35" fill="#fff" stroke="#d6d6d6"/>
<path transform="translate(81.50 211.60)" d="M10.5 4.4H24.5A6 6 0 0 1 30.5 10.4V24.4A6 6 0 0 1 24.5 30.4H10.5A6 6 0 0 1 4.5 24.4V10.4A6 6 0 0 1 10.5 4.4Z" fill="#0c4284"/>
<rect x="119.55" y="212.10" width="35" height="35" fill="#fff" stroke="#d6d6d6"/>
<path transform="translate(119.05 211.60)" d="M13.5 4.4H21.5A9 9 0 0 1 30.5 13.4V21.4A9 9 0 0 1 21.5 30.4H13.5A9 9 0 0 1 4.5 21.4V13.4A9 9 0 0 1 13.5 4.4Z" fill="#0c4284"/>
<rect x="157.10" y="212.10" width="35" height="35" fill="#fff" stroke="#d6d6d6"/>
<path transform="translate(156.60 211.60)" d="M5 5Q17.5 3.2 30 5Q31.8 17.5 30 30Q17.5 31.8 5 30Q3.2 17.5 5 5Z" fill="#0c4284"/>
<rect x="6.90" y="249.65" width="35" height="35" fill="#fff" stroke="#d6d6d6"/>
<path transform="translate(6.40 249.15)" d="M6 6h23v23h-23ZM4.80 6.00a1.2 1.2 0 1 1 2.4 0a1.2 1.2 0 1 1 -2.4 0ZM4.80 29.00a1.2 1.2 0 1 1 2.4 0a1.2 1.2 0 1 1 -2.4 0ZM8.63 6.00a1.2 1.2 0 1 1 2.4 0a1.2 1.2 0 1 1 -2.4 0ZM8.63 29.00a1.2 1.2 0 1 1 2.4 0a1.2 1.2 0 1 1 -2.4 0ZM12.47 6.00a1.2 1.2 0 1 1 2.4 0a1.2 1.2 0 1 1 -2.4 0ZM12.47 29.00a1.2 1.2 0 1 1 2.4 0a1.2 1.2 0 1 1 -2.4 0ZM16.30 6.00a1.2 1.2 0 1 1 2.4 0a1.2 1.2 0 1 1 -2.4 0ZM16.30 29.00a1.2 1.2 0 1 1 2.4 0a1.2 1.2 0 1 1 -2.4 0ZM20.13 6.00a1.2 1.2 0 1 1 2.4 0a1.2 1.2 0 1 1 -2.4 0ZM20.13 29.00a1.2 1.2 0 1 1 2.4 0a1.2 1.2 0 1 1 -2.4 0ZM23.97 6.00a1.2 1.2 0 1 1 2.4 0a1.2 1.2 0 1 1 -2.4 0ZM23.97 29.00a1.2 1.2 0 1 1 2.4 0a1.2 1.2 0 1 1 -2.4 0ZM27.80 6.00a1.2 1.2 0 1 1 2.4 0a1.2 1.2 0 1 1 -2.4 0ZM27.80 29.00a1.2 1.2 0 1 1 2.4 0a1.2 1.2 0 1 1 -2.4 0ZM4.80 9.83a1.2 1.2 0 1 1 2.4 0a1.2 1.2 0 1 1 -2.4 0ZM27.80 9.83a1.2 1.2 0 1 1 2.4 0a1.2 1.2 0 1 1 -2.4 0ZM4.80 13.67a1.2 1.2 0 1 1 2.4 0a1.2 1.2 0 1 1 -2.4 0ZM27.80 13.67a1.2 1.2 0 1 1 2.4 0a1.2 1.2 0 1 1 -2.4 0ZM4.80 17.50a1.2 1.2 0 1 1 2.4 0a1.2 1.2 0 1 1 -2.4 0ZM27.80 17.50a1.2 1.2 0 1 1 2.4 0a1.2 1.2 0 1 1 -2.4 0ZM4.80 21.33a1.2 1.2 0 1 1 2.4 0a1.2 1.2 0 1 1 -2.4 0ZM27.80 21.33a1.2 1.2 0 1 1 2.4 0a1.2 1.2 0 1 1 -2.4 0ZM4.80 25.17a1.2 1.2 0 1 1 2.4 0a1.2 1.2 0 1 1 -2.4 0ZM27.80 25.17a1.2 1.2 0 1 1 2.4 0a1.2 1.2 0 1 1 -2.4 0Z" fill="#0c4284"/>
<rect x="44.45" y="249.65" width="35" height="35" fill="#fff" stroke="#d6d6d6"/>
<path transform="translate(43.95 249.15)" d="M5.5 5.5h24v24h-24ZM4.50 5.50a1.0 1.0 0 1 1 2.0 0a1.0 1.0 0 1 1 -2.0 0ZM4.50 29.50a1.0 1.0 0 1 1 2.0 0a1.0 1.0 0 1 1 -2.0 0ZM6.90 5.50a1.0 1.0 0 1 1 2.0 0a1.0 1.0 0 1 1 -2.0 0ZM6.90 29.50a1.0 1.0 0 1 1 2.0 0a1.0 1.0 0 1 1 -2.0 0ZM9.30 5.50a1.0 1.0 0 1 1 2.0 0a1.0 1.0 0 1 1 -2.0 0ZM9.30 29.50a1.0 1.0 0 1 1 2.0 0a1.0 1.0 0 1 1 -2.0 0ZM11.70 5.50a1.0 1.0 0 1 1 2.0 0a1.0 1.0 0 1 1 -2.0 0ZM11.70 29.50a1.0 1.0 0 1 1 2.0 0a1.0 1.0 0 1 1 -2.0 0ZM14.10 5.50a1.0 1.0 0 1 1 2.0 0a1.0 1.0 0 1 1 -2.0 0ZM14.10 29.50a1.0 1.0 0 1 1 2.0 0a1.0 1.0 0 1 1 -2.0 0ZM16.50 5.50a1.0 1.0 0 1 1 2.0 0a1.0 1.0 0 1 1 -2.0 0ZM16.50 29.50a1.0 1.0 0 1 1 2.0 0a1.0 1.0 0 1 1 -2.0 0ZM18.90 5.50a1.0 1.0 0 1 1 2.0 0a1.0 1.0 0 1 1 -2.0 0ZM18.90 29.50a1.0 1.0 0 1 1 2.0 0a1.0 1.0 0 1 1 -2.0 0ZM21.30 5.50a1.0 1.0 0 1 1 2.0 0a1.0 1.0 0 1 1 -2.0 0ZM21.30 29.50a1.0 1.0 0 1 1 2.0 0a1.0 1.0 0 1 1 -2.0 0ZM23.70 5.50a1.0 1.0 0 1 1 2.0 0a1.0 1.0 0 1 1 -2.0 0ZM23.70 29.50a1.0 1.0 0 1 1 2.0 0a1.0 1.0 0 1 1 -2.0 0ZM26.10 5.50a1.0 1.0 0 1 1 2.0 0a1.0 1.0 0 1 1 -2.0 0ZM26.10 29.50a1.0 1.0 0 1 1 2.0 0a1.0 1.0 0 1 1 -2.0 0ZM28.50 5.50a1.0 1.0 0 1 1 2.0 0a1.0 1.0 0 1 1 -2.0 0ZM28.50 29.50a1.0 1.0 0 1 1 2.0 0a1.0 1.0 0 1 1 -2.0 0ZM4.50 7.90a1.0 1.0 0 1 1 2.0 0a1.0 1.0 0 1 1 -2.0 0ZM28.50 7.90a1.0 1.0 0 1 1 2.0 0a1.0 1.0 0 1 1 -2.0 0ZM4.50 10.30a1.0 1.0 0 1 1 2.0 0a1.0 1.0 0 1 1 -2.0 0ZM28.50 10.30a1.0 1.0 0 1 1 2.0 0a1.0 1.0 0 1 1 -2.0 0ZM4.50 12.70a1.0 1.0 0 1 1 2.0 0a1.0 1.0 0 1 1 -2.0 0ZM28.50 12.70a1.0 1.0 0 1 1 2.0 0a1.0 1.0 0 1 1 -2.0 0ZM4.50 15.10a1.0 1.0 0 1 1 2.0 0a1.0 1.0 0 1 1 -2.0 0ZM28.50 15.10a1.0 1.0 0 1 1 2.0 0a1.0 1.0 0 1 1 -2.0 0ZM4.50 17.50a1.0 1.0 0 1 1 2.0 0a1.0 1.0 0 1 1 -2.0 0ZM28.50 17.50a1.0 1.0 0 1 1 2.0 0a1.0 1.0 0 1 1 -2.0 0ZM4.50 19.90a1.0 1.0 0 1 1 2.0 0a1.0 1.0 0 1 1 -2.0 0ZM28.50 19.90a1.0 1.0 0 1 1 2.0 0a1.0 1.0 0 1 1 -2.0 0ZM4.50 22.30a1.0 1.0 0 1 1 2.0 0a1.0 1.0 0 1 1 -2.0 0ZM28.50 22.30a1.0 1.0 0 1 1 2.0 0a1.0 1.0 0 1 1 -2.0 0ZM4.50 24.70a1.0 1.0 0 1 1 2.0 0a1.0 1.0 0 1 1 -2.0 0ZM28.50 24.70a1.0 1.0 0 1 1 2.0 0a1.0 1.0 0 1 1 -2.0 0ZM4.50 27.10a1.0 1.0 0 1 1 2.0 0a1.0 1.0 0 1 1 -2.0 0ZM28.50 27.10a1.0 1.0 0 1 1 2.0 0a1.0 1.0 0 1 1 -2.0 0Z" fill="#0c4284"/>
<rect x="82.00" y="249.65" width="35" height="35" fill="#fff" stroke="#d6d6d6"/>
<path transform="translate(81.50 249.15)" d="M5 5h25v25h-25ZM3.90 5.00a1.1 1.1 0 1 1 2.2 0a1.1 1.1 0 1 1 -2.2 0ZM3.90 30.00a1.1 1.1 0 1 1 2.2 0a1.1 1.1 0 1 1 -2.2 0ZM7.03 5.00a1.1 1.1 0 1 1 2.2 0a1.1 1.1 0 1 1 -2.2 0ZM7.03 30.00a1.1 1.1 0 1 1 2.2 0a1.1 1.1 0 1 1 -2.2 0ZM10.15 5.00a1.1 1.1 0 1 1 2.2 0a1.1 1.1 0 1 1 -2.2 0ZM10.15 30.00a1.1 1.1 0 1 1 2.2 0a1.1 1.1 0 1 1 -2.2 0ZM13.28 5.00a1.1 1.1 0 1 1 2.2 0a1.1 1.1 0 1 1 -2.2 0ZM13.28 30.00a1.1 1.1 0 1 1 2.2 0a1.1 1.1 0 1 1 -2.2 0ZM16.40 5.00a1.1 1.1 0 1 1 2.2 0a1.1 1.1 0 1 1 -2.2 0ZM16.40 30.00a1.1 1.1 0 1 1 2.2 0a1.1 1.1 0 1 1 -2.2 0ZM19.52 5.00a1.1 1.1 0 1 1 2.2 0a1.1 1.1 0 1 1 -2.2 0ZM19.52 30.00a1.1 1.1 0 1 1 2.2 0a1.1 1.1 0 1 1 -2.2 0ZM22.65 5.00a1.1 1.1 0 1 1 2.2 0a1.1 1.1 0 1 1 -2.2 0ZM22.65 30.00a1.1 1.1 0 1 1 2.2 0a1.1 1.1 0 1 1 -2.2 0ZM25.77 5.00a1.1 1.1 0 1 1 2.2 0a1.1 1.1 0 1 1 -2.2 0ZM25.77 30.00a1.1 1.1 0 1 1 2.2 0a1.1 1.1 0 1 1 -2.2 0ZM28.90 5.00a1.1 1.1 0 1 1 2.2 0a1.1 1.1 0 1 1 -2.2 0ZM28.90 30.00a1.1 1.1 0 1 1 2.2 0a1.1 1.1 0 1 1 -2.2 0ZM3.90 8.12a1.1 1.1 0 1 1 2.2 0a1.1 1.1 0 1 1 -2.2 0ZM28.90 8.12a1.1 1.1 0 1 1 2.2 0a1.1 1.1 0 1 1 -2.2 0ZM3.90 11.25a1.1 1.1 0 1 1 2.2 0a1.1 1.1 0 1 1 -2.2 0ZM28.90 11.25a1.1 1.1 0 1 1 2.2 0a1.1 1.1 0 1 1 -2.2 0ZM3.90 14.38a1.1 1.1 0 1 1 2.2 0a1.1 1.1 0 1 1 -2.2 0ZM28.90 14.38a1.1 1.1 0 1 1 2.2 0a1.1 1.1 0 1 1 -2.2 0ZM3.90 17.50a1.1 1.1 0 1 1 2.2 0a1.1 1.1 0 1 1 -2.2 0ZM28.90 17.50a1.1 1.1 0 1 1 2.2 0a1.1 1.1 0 1 1 -2.2 0ZM3.90 20.62a1.1 1.1 0 1 1 2.2 0a1.1 1.1 0 1 1 -2.2 0ZM28.90 20.62a1.1 1.1 0 1 1 2.2 0a1.1 1.1 0 1 1 -2.2 0ZM3.90 23.75a1.1 1.1 0 1 1 2.2 0a1.1 1.1 0 1 1 -2.2 0ZM28.90 23.75a1.1 1.1 0 1 1 2.2 0a1.1 1.1 0 1 1 -2.2 0ZM3.90 26.88a1.1 1.1 0 1 1 2.2 0a1.1 1.1 0 1 1 -2.2 0ZM28.90 26.88a1.1 1.1 0 1 1 2.2 0a1.1 1.1 0 1 1 -2.2 0Z" fill="#0c4284"/>
<rect x="119.55" y="249.65" width="35" height="35" fill="#fff" stroke="#d6d6d6"/>
<path transform="translate(119.05 249.15)" d="M5 5h25v25h-25ZM4.30 5.00a0.7 0.7 0 1 1 1.4 0a0.7 0.7 0 1 1 -1.4 0ZM4.30 30.00a0.7 0.7 0 1 1 1.4 0a0.7 0.7 0 1 1 -1.4 0ZM6.38 5.00a0.7 0.7 0 1 1 1.4 0a0.7 0.7 0 1 1 -1.4 0ZM6.38 30.00a0.7 0.7 0 1 1 1.4 0a0.7 0.7 0 1 1 -1.4 0ZM8.47 5.00a0.7 0.7 0 1 1 1.4 0a0.7 0.7 0 1 1 -1.4 0ZM8.47 30.00a0.7 0.7 0 1 1 1.4 0a0.7 0.7 0 1 1 -1.4 0ZM10.55 5.00a0.7 0.7 0 1 1 1.4 0a0.7 0.7 0 1 1 -1.4 0ZM10.55 30.00a0.7 0.7 0 1 1 1.4 0a0.7 0.7 0 1 1 -1.4 0ZM12.63 5.00a0.7 0.7 0 1 1 1.4 0a0.7 0.7 0 1 1 -1.4 0ZM12.63 30.00a0.7 0.7 0 1 1 1.4 0a0.7 0.7 0 1 1 -1.4 0ZM14.72 5.00a0.7 0.7 0 1 1 1.4 0a0.7 0.7 0 1 1 -1.4 0ZM14.72 30.00a0.7 0.7 0 1 1 1.4 0a0.7 0.7 0 1 1 -1.4 0ZM16.80 5.00a0.7 0.7 0 1 1 1.4 0a0.7 0.7 0 1 1 -1.4 0ZM16.80 30.00a0.7 0.7 0 1 1 1.4 0a0.7 0.7 0 1 1 -1.4 0ZM18.88 5.00a0.7 0.7 0 1 1 1.4 0a0.7 0.7 0 1 1 -1.4 0ZM18.88 30.00a0.7 0.7 0 1 1 1.4 0a0.7 0.7 0 1 1 -1.4 0ZM20.97 5.00a0.7 0.7 0 1 1 1.4 0a0.7 0.7 0 1 1 -1.4 0ZM20.97 30.00a0.7 0.7 0 1 1 1.4 0a0.7 0.7 0 1 1 -1.4 0ZM23.05 5.00a0.7 0.7 0 1 1 1.4 0a0.7 0.7 0 1 1 -1.4 0ZM23.05 30.00a0.7 0.7 0 1 1 1.4 0a0.7 0.7 0 1 1 -1.4 0ZM25.13 5.00a0.7 0.7 0 1 1 1.4 0a0.7 0.7 0 1 1 -1.4 0ZM25.13 30.00a0.7 0.7 0 1 1 1.4 0a0.7 0.7 0 1 1 -1.4 0ZM27.22 5.00a0.7 0.7 0 1 1 1.4 0a0.7 0.7 0 1 1 -1.4 0ZM27.22 30.00a0.7 0.7 0 1 1 1.4 0a0.7 0.7 0 1 1 -1.4 0ZM29.30 5.00a0.7 0.7 0 1 1 1.4 0a0.7 0.7 0 1 1 -1.4 0ZM29.30 30.00a0.7 0.7 0 1 1 1.4 0a0.7 0.7 0 1 1 -1.4 0ZM4.30 7.08a0.7 0.7 0 1 1 1.4 0a0.7 0.7 0 1 1 -1.4 0ZM29.30 7.08a0.7 0.7 0 1 1 1.4 0a0.7 0.7 0 1 1 -1.4 0ZM4.30 9.17a0.7 0.7 0 1 1 1.4 0a0.7 0.7 0 1 1 -1.4 0ZM29.30 9.17a0.7 0.7 0 1 1 1.4 0a0.7 0.7 0 1 1 -1.4 0ZM4.30 11.25a0.7 0.7 0 1 1 1.4 0a0.7 0.7 0 1 1 -1.4 0ZM29.30 11.25a0.7 0.7 0 1 1 1.4 0a0.7 0.7 0 1 1 -1.4 0ZM4.30 13.33a0.7 0.7 0 1 1 1.4 0a0.7 0.7 0 1 1 -1.4 0ZM29.30 13.33a0.7 0.7 0 1 1 1.4 0a0.7 0.7 0 1 1 -1.4 0ZM4.30 15.42a0.7 0.7 0 1 1 1.4 0a0.7 0.7 0 1 1 -1.4 0ZM29.30 15.42a0.7 0.7 0 1 1 1.4 0a0.7 0.7 0 1 1 -1.4 0ZM4.30 17.50a0.7 0.7 0 1 1 1.4 0a0.7 0.7 0 1 1 -1.4 0ZM29.30 17.50a0.7 0.7 0 1 1 1.4 0a0.7 0.7 0 1 1 -1.4 0ZM4.30 19.58a0.7 0.7 0 1 1 1.4 0a0.7 0.7 0 1 1 -1.4 0ZM29.30 19.58a0.7 0.7 0 1 1 1.4 0a0.7 0.7 0 1 1 -1.4 0ZM4.30 21.67a0.7 0.7 0 1 1 1.4 0a0.7 0.7 0 1 1 -1.4 0ZM29.30 21.67a0.7 0.7 0 1 1 1.4 0a0.7 0.7 0 1 1 -1.4 0ZM4.30 23.75a0.7 0.7 0 1 1 1.4 0a0.7 0.7 0 1 1 -1.4 0ZM29.30 23.75a0.7 0.7 0 1 1 1.4 0a0.7 0.7 0 1 1 -1.4 0ZM4.30 25.83a0.7 0.7 0 1 1 1.4 0a0.7 0.7 0 1 1 -1.4 0ZM29.30 25.83a0.7 0.7 0 1 1 1.4 0a0.7 0.7 0 1 1 -1.4 0ZM4.30 27.92a0.7 0.7 0 1 1 1.4 0a0.7 0.7 0 1 1 -1.4 0ZM29.30 27.92a0.7 0.7 0 1 1 1.4 0a0.7 0.7 0 1 1 -1.4 0Z" fill="#0c4284"/>
<rect x="157.10" y="249.65" width="35" height="35" fill="#fff" stroke="#d6d6d6"/>
<path transform="translate(156.60 249.15)" d="M5 5h25v25h-25ZM3.70 5.00a1.3 1.3 0 1 1 2.6 0a1.3 1.3 0 1 1 -2.6 0ZM3.70 30.00a1.3 1.3 0 1 1 2.6 0a1.3 1.3 0 1 1 -2.6 0ZM7.27 5.00a1.3 1.3 0 1 1 2.6 0a1.3 1.3 0 1 1 -2.6 0ZM7.27 30.00a1.3 1.3 0 1 1 2.6 0a1.3 1.3 0 1 1 -2.6 0ZM10.84 5.00a1.3 1.3 0 1 1 2.6 0a1.3 1.3 0 1 1 -2.6 0ZM10.84 30.00a1.3 1.3 0 1 1 2.6 0a1.3 1.3 0 1 1 -2.6 0ZM14.41 5.00a1.3 1.3 0 1 1 2.6 0a1.3 1.3 0 1 1 -2.6 0ZM14.41 30.00a1.3 1.3 0 1 1 2.6 0a1.3 1.3 0 1 1 -2.6 0ZM17.99 5.00a1.3 1.3 0 1 1 2.6 0a1.3 1.3 0 1 1 -2.6 0ZM17.99 30.00a1.3 1.3 0 1 1 2.6 0a1.3 1.3 0 1 1 -2.6 0ZM21.56 5.00a1.3 1.3 0 1 1 2.6 0a1.3 1.3 0 1 1 -2.6 0ZM21.56 30.00a1.3 1.3 0 1 1 2.6 0a1.3 1.3 0 1 1 -2.6 0ZM25.13 5.00a1.3 1.3 0 1 1 2.6 0a1.3 1.3 0 1 1 -2.6 0ZM25.13 30.00a1.3 1.3 0 1 1 2.6 0a1.3 1.3 0 1 1 -2.6 0ZM28.70 5.00a1.3 1.3 0 1 1 2.6 0a1.3 1.3 0 1 1 -2.6 0ZM28.70 30.00a1.3 1.3 0 1 1 2.6 0a1.3 1.3 0 1 1 -2.6 0ZM3.70 8.57a1.3 1.3 0 1 1 2.6 0a1.3 1.3 0 1 1 -2.6 0ZM28.70 8.57a1.3 1.3 0 1 1 2.6 0a1.3 1.3 0 1 1 -2.6 0ZM3.70 12.14a1.3 1.3 0 1 1 2.6 0a1.3 1.3 0 1 1 -2.6 0ZM28.70 12.14a1.3 1.3 0 1 1 2.6 0a1.3 1.3 0 1 1 -2.6 0ZM3.70 15.71a1.3 1.3 0 1 1 2.6 0a1.3 1.3 0 1 1 -2.6 0ZM28.70 15.71a1.3 1.3 0 1 1 2.6 0a1.3 1.3 0 1 1 -2.6 0ZM3.70 19.29a1.3 1.3 0 1 1 2.6 0a1.3 1.3 0 1 1 -2.6 0ZM28.70 19.29a1.3 1.3 0 1 1 2.6 0a1.3 1.3 0 1 1 -2.6 0ZM3.70 22.86a1.3 1.3 0 1 1 2.6 0a1.3 1.3 0 1 1 -2.6 0ZM28.70 22.86a1.3 1.3 0 1 1 2.6 0a1.3 1.3 0 1 1 -2.6 0ZM3.70 26.43a1.3 1.3 0 1 1 2.6 0a1.3 1.3 0 1 1 -2.6 0ZM28.70 26.43a1.3 1.3 0 1 1 2.6 0a1.3 1.3 0 1 1 -2.6 0Z" fill="#0c4284"/>
<rect x="6.90" y="287.20" width="35" height="35" fill="#fff" stroke="#d6d6d6"/>
<path transform="translate(6.40 286.70)" d="M5 4.5h24v26h-24ZM4.00 4.50a1.0 1.0 0 1 1 2.0 0a1.0 1.0 0 1 1 -2.0 0ZM4.00 30.50a1.0 1.0 0 1 1 2.0 0a1.0 1.0 0 1 1 -2.0 0ZM7.00 4.50a1.0 1.0 0 1 1 2.0 0a1.0 1.0 0 1 1 -2.0 0ZM7.00 30.50a1.0 1.0 0 1 1 2.0 0a1.0 1.0 0 1 1 -2.0 0ZM10.00 4.50a1.0 1.0 0 1 1 2.0 0a1.0 1.0 0 1 1 -2.0 0ZM10.00 30.50a1.0 1.0 0 1 1 2.0 0a1.0 1.0 0 1 1 -2.0 0ZM13.00 4.50a1.0 1.0 0 1 1 2.0 0a1.0 1.0 0 1 1 -2.0 0ZM13.00 30.50a1.0 1.0 0 1 1 2.0 0a1.0 1.0 0 1 1 -2.0 0ZM16.00 4.50a1.0 1.0 0 1 1 2.0 0a1.0 1.0 0 1 1 -2.0 0ZM16.00 30.50a1.0 1.0 0 1 1 2.0 0a1.0 1.0 0 1 1 -2.0 0ZM19.00 4.50a1.0 1.0 0 1 1 2.0 0a1.0 1.0 0 1 1 -2.0 0ZM19.00 30.50a1.0 1.0 0 1 1 2.0 0a1.0 1.0 0 1 1 -2.0 0ZM22.00 4.50a1.0 1.0 0 1 1 2.0 0a1.0 1.0 0 1 1 -2.0 0ZM22.00 30.50a1.0 1.0 0 1 1 2.0 0a1.0 1.0 0 1 1 -2.0 0ZM25.00 4.50a1.0 1.0 0 1 1 2.0 0a1.0 1.0 0 1 1 -2.0 0ZM25.00 30.50a1.0 1.0 0 1 1 2.0 0a1.0 1.0 0 1 1 -2.0 0ZM28.00 4.50a1.0 1.0 0 1 1 2.0 0a1.0 1.0 0 1 1 -2.0 0ZM28.00 30.50a1.0 1.0 0 1 1 2.0 0a1.0 1.0 0 1 1 -2.0 0ZM4.00 7.39a1.0 1.0 0 1 1 2.0 0a1.0 1.0 0 1 1 -2.0 0ZM28.00 7.39a1.0 1.0 0 1 1 2.0 0a1.0 1.0 0 1 1 -2.0 0ZM4.00 10.28a1.0 1.0 0 1 1 2.0 0a1.0 1.0 0 1 1 -2.0 0ZM28.00 10.28a1.0 1.0 0 1 1 2.0 0a1.0 1.0 0 1 1 -2.0 0ZM4.00 13.17a1.0 1.0 0 1 1 2.0 0a1.0 1.0 0 1 1 -2.0 0ZM28.00 13.17a1.0 1.0 0 1 1 2.0 0a1.0 1.0 0 1 1 -2.0 0ZM4.00 16.06a1.0 1.0 0 1 1 2.0 0a1.0 1.0 0 1 1 -2.0 0ZM28.00 16.06a1.0 1.0 0 1 1 2.0 0a1.0 1.0 0 1 1 -2.0 0ZM4.00 18.94a1.0 1.0 0 1 1 2.0 0a1.0 1.0 0 1 1 -2.0 0ZM28.00 18.94a1.0 1.0 0 1 1 2.0 0a1.0 1.0 0 1 1 -2.0 0ZM4.00 21.83a1.0 1.0 0 1 1 2.0 0a1.0 1.0 0 1 1 -2.0 0ZM28.00 21.83a1.0 1.0 0 1 1 2.0 0a1.0 1.0 0 1 1 -2.0 0ZM4.00 24.72a1.0 1.0 0 1 1 2.0 0a1.0 1.0 0 1 1 -2.0 0ZM28.00 24.72a1.0 1.0 0 1 1 2.0 0a1.0 1.0 0 1 1 -2.0 0ZM4.00 27.61a1.0 1.0 0 1 1 2.0 0a1.0 1.0 0 1 1 -2.0 0ZM28.00 27.61a1.0 1.0 0 1 1 2.0 0a1.0 1.0 0 1 1 -2.0 0Z" fill="#0c4284"/>
<rect x="44.45" y="287.20" width="35" height="35" fill="#fff" stroke="#d6d6d6"/>
<path transform="translate(43.95 286.70)" d="M5.0 8.5H30.0A0.5 0.5 0 0 1 30.5 9.0V26.0A0.5 0.5 0 0 1 30.0 26.5H5.0A0.5 0.5 0 0 1 4.5 26.0V9.0A0.5 0.5 0 0 1 5.0 8.5Z" fill="#0c4284"/>
<rect x="82.00" y="287.20" width="35" height="35" fill="#fff" stroke="#d6d6d6"/>
<path transform="translate(81.50 286.70)" d="M7.5 8.5H27.5A3 3 0 0 1 30.5 11.5V23.5A3 3 0 0 1 27.5 26.5H7.5A3 3 0 0 1 4.5 23.5V11.5A3 3 0 0 1 7.5 8.5Z" fill="#0c4284"/>
<rect x="119.55" y="287.20" width="35" height="35" fill="#fff" stroke="#d6d6d6"/>
<path transform="translate(119.05 286.70)" d="M10.5 8.5H24.5A6 6 0 0 1 30.5 14.5V20.5A6 6 0 0 1 24.5 26.5H10.5A6 6 0 0 1 4.5 20.5V14.5A6 6 0 0 1 10.5 8.5Z" fill="#0c4284"/>
<rect x="157.10" y="287.20" width="35" height="35" fill="#fff" stroke="#d6d6d6"/>
<path transform="translate(156.60 286.70)" d="M5 9Q17.5 7.2 30 9Q31.8 17.5 30 26Q17.5 27.8 5 26Q3.2 17.5 5 9Z" fill="#0c4284"/>
<rect x="6.90" y="324.75" width="35" height="35" fill="#fff" stroke="#d6d6d6"/>
<path transform="translate(6.40 324.25)" d="M6 9.5h23v16h-23ZM4.80 9.50a1.2 1.2 0 1 1 2.4 0a1.2 1.2 0 1 1 -2.4 0ZM4.80 25.50a1.2 1.2 0 1 1 2.4 0a1.2 1.2 0 1 1 -2.4 0ZM8.09 9.50a1.2 1.2 0 1 1 2.4 0a1.2 1.2 0 1 1 -2.4 0ZM8.09 25.50a1.2 1.2 0 1 1 2.4 0a1.2 1.2 0 1 1 -2.4 0ZM11.37 9.50a1.2 1.2 0 1 1 2.4 0a1.2 1.2 0 1 1 -2.4 0ZM11.37 25.50a1.2 1.2 0 1 1 2.4 0a1.2 1.2 0 1 1 -2.4 0ZM14.66 9.50a1.2 1.2 0 1 1 2.4 0a1.2 1.2 0 1 1 -2.4 0ZM14.66 25.50a1.2 1.2 0 1 1 2.4 0a1.2 1.2 0 1 1 -2.4 0ZM17.94 9.50a1.2 1.2 0 1 1 2.4 0a1.2 1.2 0 1 1 -2.4 0ZM17.94 25.50a1.2 1.2 0 1 1 2.4 0a1.2 1.2 0 1 1 -2.4 0ZM21.23 9.50a1.2 1.2 0 1 1 2.4 0a1.2 1.2 0 1 1 -2.4 0ZM21.23 25.50a1.2 1.2 0 1 1 2.4 0a1.2 1.2 0 1 1 -2.4 0ZM24.51 9.50a1.2 1.2 0 1 1 2.4 0a1.2 1.2 0 1 1 -2.4 0ZM24.51 25.50a1.2 1.2 0 1 1 2.4 0a1.2 1.2 0 1 1 -2.4 0ZM27.80 9.50a1.2 1.2 0 1 1 2.4 0a1.2 1.2 0 1 1 -2.4 0ZM27.80 25.50a1.2 1.2 0 1 1 2.4 0a1.2 1.2 0 1 1 -2.4 0ZM4.80 12.70a1.2 1.2 0 1 1 2.4 0a1.2 1.2 0 1 1 -2.4 0ZM27.80 12.70a1.2 1.2 0 1 1 2.4 0a1.2 1.2 0 1 1 -2.4 0ZM4.80 15.90a1.2 1.2 0 1 1 2.4 0a1.2 1.2 0 1 1 -2.4 0ZM27.80 15.90a1.2 1.2 0 1 1 2.4 0a1.2 1.2 0 1 1 -2.4 0ZM4.80 19.10a1.2 1.2 0 1 1 2.4 0a1.2 1.2 0 1 1 -2.4 0ZM27.80 19.10a1.2 1.2 0 1 1 2.4 0a1.2 1.2 0 1 1 -2.4 0ZM4.80 22.30a1.2 1.2 0 1 1 2.4 0a1.2 1.2 0 1 1 -2.4 0ZM27.80 22.30a1.2 1.2 0 1 1 2.4 0a1.2 1.2 0 1 1 -2.4 0Z" fill="#0c4284"/>
<rect x="44.45" y="324.75" width="35" height="35" fill="#fff" stroke="#d6d6d6"/>
<path transform="translate(43.95 324.25)" d="M5.5 9.5h24v16h-24ZM4.50 9.50a1.0 1.0 0 1 1 2.0 0a1.0 1.0 0 1 1 -2.0 0ZM4.50 25.50a1.0 1.0 0 1 1 2.0 0a1.0 1.0 0 1 1 -2.0 0ZM6.90 9.50a1.0 1.0 0 1 1 2.0 0a1.0 1.0 0 1 1 -2.0 0ZM6.90 25.50a1.0 1.0 0 1 1 2.0 0a1.0 1.0 0 1 1 -2.0 0ZM9.30 9.50a1.0 1.0 0 1 1 2.0 0a1.0 1.0 0 1 1 -2.0 0ZM9.30 25.50a1.0 1.0 0 1 1 2.0 0a1.0 1.0 0 1 1 -2.0 0ZM11.70 9.50a1.0 1.0 0 1 1 2.0 0a1.0 1.0 0 1 1 -2.0 0ZM11.70 25.50a1.0 1.0 0 1 1 2.0 0a1.0 1.0 0 1 1 -2.0 0ZM14.10 9.50a1.0 1.0 0 1 1 2.0 0a1.0 1.0 0 1 1 -2.0 0ZM14.10 25.50a1.0 1.0 0 1 1 2.0 0a1.0 1.0 0 1 1 -2.0 0ZM16.50 9.50a1.0 1.0 0 1 1 2.0 0a1.0 1.0 0 1 1 -2.0 0ZM16.50 25.50a1.0 1.0 0 1 1 2.0 0a1.0 1.0 0 1 1 -2.0 0ZM18.90 9.50a1.0 1.0 0 1 1 2.0 0a1.0 1.0 0 1 1 -2.0 0ZM18.90 25.50a1.0 1.0 0 1 1 2.0 0a1.0 1.0 0 1 1 -2.0 0ZM21.30 9.50a1.0 1.0 0 1 1 2.0 0a1.0 1.0 0 1 1 -2.0 0ZM21.30 25.50a1.0 1.0 0 1 1 2.0 0a1.0 1.0 0 1 1 -2.0 0ZM23.70 9.50a1.0 1.0 0 1 1 2.0 0a1.0 1.0 0 1 1 -2.0 0ZM23.70 25.50a1.0 1.0 0 1 1 2.0 0a1.0 1.0 0 1 1 -2.0 0ZM26.10 9.50a1.0 1.0 0 1 1 2.0 0a1.0 1.0 0 1 1 -2.0 0ZM26.10 25.50a1.0 1.0 0 1 1 2.0 0a1.0 1.0 0 1 1 -2.0 0ZM28.50 9.50a1.0 1.0 0 1 1 2.0 0a1.0 1.0 0 1 1 -2.0 0ZM28.50 25.50a1.0 1.0 0 1 1 2.0 0a1.0 1.0 0 1 1 -2.0 0ZM4.50 11.79a1.0 1.0 0 1 1 2.0 0a1.0 1.0 0 1 1 -2.0 0ZM28.50 11.79a1.0 1.0 0 1 1 2.0 0a1.0 1.0 0 1 1 -2.0 0ZM4.50 14.07a1.0 1.0 0 1 1 2.0 0a1.0 1.0 0 1 1 -2.0 0ZM28.50 14.07a1.0 1.0 0 1 1 2.0 0a1.0 1.0 0 1 1 -2.0 0ZM4.50 16.36a1.0 1.0 0 1 1 2.0 0a1.0 1.0 0 1 1 -2.0 0ZM28.50 16.36a1.0 1.0 0 1 1 2.0 0a1.0 1.0 0 1 1 -2.0 0ZM4.50 18.64a1.0 1.0 0 1 1 2.0 0a1.0 1.0 0 1 1 -2.0 0ZM28.50 18.64a1.0 1.0 0 1 1 2.0 0a1.0 1.0 0 1 1 -2.0 0ZM4.50 20.93a1.0 1.0 0 1 1 2.0 0a1.0 1.0 0 1 1 -2.0 0ZM28.50 20.93a1.0 1.0 0 1 1 2.0 0a1.0 1.0 0 1 1 -2.0 0ZM4.50 23.21a1.0 1.0 0 1 1 2.0 0a1.0 1.0 0 1 1 -2.0 0ZM28.50 23.21a1.0 1.0 0 1 1 2.0 0a1.0 1.0 0 1 1 -2.0 0Z" fill="#0c4284"/>
<rect x="82.00" y="324.75" width="35" height="35" fill="#fff" stroke="#d6d6d6"/>
<path transform="translate(81.50 324.25)" d="M5 9.5h25v16h-25ZM3.90 9.50a1.1 1.1 0 1 1 2.2 0a1.1 1.1 0 1 1 -2.2 0ZM3.90 25.50a1.1 1.1 0 1 1 2.2 0a1.1 1.1 0 1 1 -2.2 0ZM7.03 9.50a1.1 1.1 0 1 1 2.2 0a1.1 1.1 0 1 1 -2.2 0ZM7.03 25.50a1.1 1.1 0 1 1 2.2 0a1.1 1.1 0 1 1 -2.2 0ZM10.15 9.50a1.1 1.1 0 1 1 2.2 0a1.1 1.1 0 1 1 -2.2 0ZM10.15 25.50a1.1 1.1 0 1 1 2.2 0a1.1 1.1 0 1 1 -2.2 0ZM13.28 9.50a1.1 1.1 0 1 1 2.2 0a1.1 1.1 0 1 1 -2.2 0ZM13.28 25.50a1.1 1.1 0 1 1 2.2 0a1.1 1.1 0 1 1 -2.2 0ZM16.40 9.50a1.1 1.1 0 1 1 2.2 0a1.1 1.1 0 1 1 -2.2 0ZM16.40 25.50a1.1 1.1 0 1 1 2.2 0a1.1 1.1 0 1 1 -2.2 0ZM19.52 9.50a1.1 1.1 0 1 1 2.2 0a1.1 1.1 0 1 1 -2.2 0ZM19.52 25.50a1.1 1.1 0 1 1 2.2 0a1.1 1.1 0 1 1 -2.2 0ZM22.65 9.50a1.1 1.1 0 1 1 2.2 0a1.1 1.1 0 1 1 -2.2 0ZM22.65 25.50a1.1 1.1 0 1 1 2.2 0a1.1 1.1 0 1 1 -2.2 0ZM25.77 9.50a1.1 1.1 0 1 1 2.2 0a1.1 1.1 0 1 1 -2.2 0ZM25.77 25.50a1.1 1.1 0 1 1 2.2 0a1.1 1.1 0 1 1 -2.2 0ZM28.90 9.50a1.1 1.1 0 1 1 2.2 0a1.1 1.1 0 1 1 -2.2 0ZM28.90 25.50a1.1 1.1 0 1 1 2.2 0a1.1 1.1 0 1 1 -2.2 0ZM3.90 12.70a1.1 1.1 0 1 1 2.2 0a1.1 1.1 0 1 1 -2.2 0ZM28.90 12.70a1.1 1.1 0 1 1 2.2 0a1.1 1.1 0 1 1 -2.2 0ZM3.90 15.90a1.1 1.1 0 1 1 2.2 0a1.1 1.1 0 1 1 -2.2 0ZM28.90 15.90a1.1 1.1 0 1 1 2.2 0a1.1 1.1 0 1 1 -2.2 0ZM3.90 19.10a1.1 1.1 0 1 1 2.2 0a1.1 1.1 0 1 1 -2.2 0ZM28.90 19.10a1.1 1.1 0 1 1 2.2 0a1.1 1.1 0 1 1 -2.2 0ZM3.90 22.30a1.1 1.1 0 1 1 2.2 0a1.1 1.1 0 1 1 -2.2 0ZM28.90 22.30a1.1 1.1 0 1 1 2.2 0a1.1 1.1 0 1 1 -2.2 0Z" fill="#0c4284"/>
<rect x="119.55" y="324.75" width="35" height="35" fill="#fff" stroke="#d6d6d6"/>
<path transform="translate(119.05 324.25)" d="M5 9.5h25v16h-25ZM4.30 9.50a0.7 0.7 0 1 1 1.4 0a0.7 0.7 0 1 1 -1.4 0ZM4.30 25.50a0.7 0.7 0 1 1 1.4 0a0.7 0.7 0 1 1 -1.4 0ZM6.38 9.50a0.7 0.7 0 1 1 1.4 0a0.7 0.7 0 1 1 -1.4 0ZM6.38 25.50a0.7 0.7 0 1 1 1.4 0a0.7 0.7 0 1 1 -1.4 0ZM8.47 9.50a0.7 0.7 0 1 1 1.4 0a0.7 0.7 0 1 1 -1.4 0ZM8.47 25.50a0.7 0.7 0 1 1 1.4 0a0.7 0.7 0 1 1 -1.4 0ZM10.55 9.50a0.7 0.7 0 1 1 1.4 0a0.7 0.7 0 1 1 -1.4 0ZM10.55 25.50a0.7 0.7 0 1 1 1.4 0a0.7 0.7 0 1 1 -1.4 0ZM12.63 9.50a0.7 0.7 0 1 1 1.4 0a0.7 0.7 0 1 1 -1.4 0ZM12.63 25.50a0.7 0.7 0 1 1 1.4 0a0.7 0.7 0 1 1 -1.4 0ZM14.72 9.50a0.7 0.7 0 1 1 1.4 0a0.7 0.7 0 1 1 -1.4 0ZM14.72 25.50a0.7 0.7 0 1 1 1.4 0a0.7 0.7 0 1 1 -1.4 0ZM16.80 9.50a0.7 0.7 0 1 1 1.4 0a0.7 0.7 0 1 1 -1.4 0ZM16.80 25.50a0.7 0.7 0 1 1 1.4 0a0.7 0.7 0 1 1 -1.4 0ZM18.88 9.50a0.7 0.7 0 1 1 1.4 0a0.7 0.7 0 1 1 -1.4 0ZM18.88 25.50a0.7 0.7 0 1 1 1.4 0a0.7 0.7 0 1 1 -1.4 0ZM20.97 9.50a0.7 0.7 0 1 1 1.4 0a0.7 0.7 0 1 1 -1.4 0ZM20.97 25.50a0.7 0.7 0 1 1 1.4 0a0.7 0.7 0 1 1 -1.4 0ZM23.05 9.50a0.7 0.7 0 1 1 1.4 0a0.7 0.7 0 1 1 -1.4 0ZM23.05 25.50a0.7 0.7 0 1 1 1.4 0a0.7 0.7 0 1 1 -1.4 0ZM25.13 9.50a0.7 0.7 0 1 1 1.4 0a0.7 0.7 0 1 1 -1.4 0ZM25.13 25.50a0.7 0.7 0 1 1 1.4 0a0.7 0.7 0 1 1 -1.4 0ZM27.22 9.50a0.7 0.7 0 1 1 1.4 0a0.7 0.7 0 1 1 -1.4 0ZM27.22 25.50a0.7 0.7 0 1 1 1.4 0a0.7 0.7 0 1 1 -1.4 0ZM29.30 9.50a0.7 0.7 0 1 1 1.4 0a0.7 0.7 0 1 1 -1.4 0ZM29.30 25.50a0.7 0.7 0 1 1 1.4 0a0.7 0.7 0 1 1 -1.4 0ZM4.30 11.50a0.7 0.7 0 1 1 1.4 0a0.7 0.7 0 1 1 -1.4 0ZM29.30 11.50a0.7 0.7 0 1 1 1.4 0a0.7 0.7 0 1 1 -1.4 0ZM4.30 13.50a0.7 0.7 0 1 1 1.4 0a0.7 0.7 0 1 1 -1.4 0ZM29.30 13.50a0.7 0.7 0 1 1 1.4 0a0.7 0.7 0 1 1 -1.4 0ZM4.30 15.50a0.7 0.7 0 1 1 1.4 0a0.7 0.7 0 1 1 -1.4 0ZM29.30 15.50a0.7 0.7 0 1 1 1.4 0a0.7 0.7 0 1 1 -1.4 0ZM4.30 17.50a0.7 0.7 0 1 1 1.4 0a0.7 0.7 0 1 1 -1.4 0ZM29.30 17.50a0.7 0.7 0 1 1 1.4 0a0.7 0.7 0 1 1 -1.4 0ZM4.30 19.50a0.7 0.7 0 1 1 1.4 0a0.7 0.7 0 1 1 -1.4 0ZM29.30 19.50a0.7 0.7 0 1 1 1.4 0a0.7 0.7 0 1 1 -1.4 0ZM4.30 21.50a0.7 0.7 0 1 1 1.4 0a0.7 0.7 0 1 1 -1.4 0ZM29.30 21.50a0.7 0.7 0 1 1 1.4 0a0.7 0.7 0 1 1 -1.4 0ZM4.30 23.50a0.7 0.7 0 1 1 1.4 0a0.7 0.7 0 1 1 -1.4 0ZM29.30 23.50a0.7 0.7 0 1 1 1.4 0a0.7 0.7 0 1 1 -1.4 0Z" fill="#0c4284"/>
<rect x="157.10" y="324.75" width="35" height="35" fill="#fff" stroke="#d6d6d6"/>
<path transform="translate(156.60 324.25)" d="M5 9.5h25v16h-25ZM3.70 9.50a1.3 1.3 0 1 1 2.6 0a1.3 1.3 0 1 1 -2.6 0ZM3.70 25.50a1.3 1.3 0 1 1 2.6 0a1.3 1.3 0 1 1 -2.6 0ZM7.27 9.50a1.3 1.3 0 1 1 2.6 0a1.3 1.3 0 1 1 -2.6 0ZM7.27 25.50a1.3 1.3 0 1 1 2.6 0a1.3 1.3 0 1 1 -2.6 0ZM10.84 9.50a1.3 1.3 0 1 1 2.6 0a1.3 1.3 0 1 1 -2.6 0ZM10.84 25.50a1.3 1.3 0 1 1 2.6 0a1.3 1.3 0 1 1 -2.6 0ZM14.41 9.50a1.3 1.3 0 1 1 2.6 0a1.3 1.3 0 1 1 -2.6 0ZM14.41 25.50a1.3 1.3 0 1 1 2.6 0a1.3 1.3 0 1 1 -2.6 0ZM17.99 9.50a1.3 1.3 0 1 1 2.6 0a1.3 1.3 0 1 1 -2.6 0ZM17.99 25.50a1.3 1.3 0 1 1 2.6 0a1.3 1.3 0 1 1 -2.6 0ZM21.56 9.50a1.3 1.3 0 1 1 2.6 0a1.3 1.3 0 1 1 -2.6 0ZM21.56 25.50a1.3 1.3 0 1 1 2.6 0a1.3 1.3 0 1 1 -2.6 0ZM25.13 9.50a1.3 1.3 0 1 1 2.6 0a1.3 1.3 0 1 1 -2.6 0ZM25.13 25.50a1.3 1.3 0 1 1 2.6 0a1.3 1.3 0 1 1 -2.6 0ZM28.70 9.50a1.3 1.3 0 1 1 2.6 0a1.3 1.3 0 1 1 -2.6 0ZM28.70 25.50a1.3 1.3 0 1 1 2.6 0a1.3 1.3 0 1 1 -2.6 0ZM3.70 13.50a1.3 1.3 0 1 1 2.6 0a1.3 1.3 0 1 1 -2.6 0ZM28.70 13.50a1.3 1.3 0 1 1 2.6 0a1.3 1.3 0 1 1 -2.6 0ZM3.70 17.50a1.3 1.3 0 1 1 2.6 0a1.3 1.3 0 1 1 -2.6 0ZM28.70 17.50a1.3 1.3 0 1 1 2.6 0a1.3 1.3 0 1 1 -2.6 0ZM3.70 21.50a1.3 1.3 0 1 1 2.6 0a1.3 1.3 0 1 1 -2.6 0ZM28.70 21.50a1.3 1.3 0 1 1 2.6 0a1.3 1.3 0 1 1 -2.6 0Z" fill="#0c4284"/>
<rect x="6.90" y="362.30" width="35" height="35" fill="#fff" stroke="#d6d6d6"/>
<path transform="translate(6.40 361.80)" d="M5 8.5h25v18h-25ZM4.00 8.50a1.0 1.0 0 1 1 2.0 0a1.0 1.0 0 1 1 -2.0 0ZM4.00 26.50a1.0 1.0 0 1 1 2.0 0a1.0 1.0 0 1 1 -2.0 0ZM7.12 8.50a1.0 1.0 0 1 1 2.0 0a1.0 1.0 0 1 1 -2.0 0ZM7.12 26.50a1.0 1.0 0 1 1 2.0 0a1.0 1.0 0 1 1 -2.0 0ZM10.25 8.50a1.0 1.0 0 1 1 2.0 0a1.0 1.0 0 1 1 -2.0 0ZM10.25 26.50a1.0 1.0 0 1 1 2.0 0a1.0 1.0 0 1 1 -2.0 0ZM13.38 8.50a1.0 1.0 0 1 1 2.0 0a1.0 1.0 0 1 1 -2.0 0ZM13.38 26.50a1.0 1.0 0 1 1 2.0 0a1.0 1.0 0 1 1 -2.0 0ZM16.50 8.50a1.0 1.0 0 1 1 2.0 0a1.0 1.0 0 1 1 -2.0 0ZM16.50 26.50a1.0 1.0 0 1 1 2.0 0a1.0 1.0 0 1 1 -2.0 0ZM19.62 8.50a1.0 1.0 0 1 1 2.0 0a1.0 1.0 0 1 1 -2.0 0ZM19.62 26.50a1.0 1.0 0 1 1 2.0 0a1.0 1.0 0 1 1 -2.0 0ZM22.75 8.50a1.0 1.0 0 1 1 2.0 0a1.0 1.0 0 1 1 -2.0 0ZM22.75 26.50a1.0 1.0 0 1 1 2.0 0a1.0 1.0 0 1 1 -2.0 0ZM25.88 8.50a1.0 1.0 0 1 1 2.0 0a1.0 1.0 0 1 1 -2.0 0ZM25.88 26.50a1.0 1.0 0 1 1 2.0 0a1.0 1.0 0 1 1 -2.0 0ZM29.00 8.50a1.0 1.0 0 1 1 2.0 0a1.0 1.0 0 1 1 -2.0 0ZM29.00 26.50a1.0 1.0 0 1 1 2.0 0a1.0 1.0 0 1 1 -2.0 0ZM4.00 11.50a1.0 1.0 0 1 1 2.0 0a1.0 1.0 0 1 1 -2.0 0ZM29.00 11.50a1.0 1.0 0 1 1 2.0 0a1.0 1.0 0 1 1 -2.0 0ZM4.00 14.50a1.0 1.0 0 1 1 2.0 0a1.0 1.0 0 1 1 -2.0 0ZM29.00 14.50a1.0 1.0 0 1 1 2.0 0a1.0 1.0 0 1 1 -2.0 0ZM4.00 17.50a1.0 1.0 0 1 1 2.0 0a1.0 1.0 0 1 1 -2.0 0ZM29.00 17.50a1.0 1.0 0 1 1 2.0 0a1.0 1.0 0 1 1 -2.0 0ZM4.00 20.50a1.0 1.0 0 1 1 2.0 0a1.0 1.0 0 1 1 -2.0 0ZM29.00 20.50a1.0 1.0 0 1 1 2.0 0a1.0 1.0 0 1 1 -2.0 0ZM4.00 23.50a1.0 1.0 0 1 1 2.0 0a1.0 1.0 0 1 1 -2.0 0ZM29.00 23.50a1.0 1.0 0 1 1 2.0 0a1.0 1.0 0 1 1 -2.0 0Z" fill="#0c4284"/>
<rect x="44.45" y="362.30" width="35" height="35" fill="#fff" stroke="#d6d6d6"/>
<path transform="translate(43.95 361.80)" d="M5.0 11.5H30.0A0.5 0.5 0 0 1 30.5 12.0V23.0A0.5 0.5 0 0 1 30.0 23.5H5.0A0.5 0.5 0 0 1 4.5 23.0V12.0A0.5 0.5 0 0 1 5.0 11.5Z" fill="#0c4284"/>
<rect x="82.00" y="362.30" width="35" height="35" fill="#fff" stroke="#d6d6d6"/>
<path transform="translate(81.50 361.80)" d="M7.5 11.5H27.5A3 3 0 0 1 30.5 14.5V20.5A3 3 0 0 1 27.5 23.5H7.5A3 3 0 0 1 4.5 20.5V14.5A3 3 0 0 1 7.5 11.5Z" fill="#0c4284"/>
<rect x="119.55" y="362.30" width="35" height="35" fill="#fff" stroke="#d6d6d6"/>
<path transform="translate(119.05 361.80)" d="M10.5 10.5H24.5A6 6 0 0 1 30.5 16.5V18.5A6 6 0 0 1 24.5 24.5H10.5A6 6 0 0 1 4.5 18.5V16.5A6 6 0 0 1 10.5 10.5Z" fill="#0c4284"/>
<rect x="157.10" y="362.30" width="35" height="35" fill="#fff" stroke="#d6d6d6"/>
<path transform="translate(156.60 361.80)" d="M13.5 8.5H21.5A9 9 0 0 1 30.5 17.5V17.5A9 9 0 0 1 21.5 26.5H13.5A9 9 0 0 1 4.5 17.5V17.5A9 9 0 0 1 13.5 8.5Z" fill="#0c4284"/>
<rect x="6.90" y="399.85" width="35" height="35" fill="#fff" stroke="#d6d6d6"/>
<path transform="translate(6.40 399.35)" d="M9.55 12.9H25.45A5.25 5.25 0 0 1 30.7 18.15V18.15A5.25 5.25 0 0 1 25.45 23.4H9.55A5.25 5.25 0 0 1 4.3 18.15V18.15A5.25 5.25 0 0 1 9.55 12.9Z" fill="#0c4284"/>
<rect x="44.45" y="399.85" width="35" height="35" fill="#fff" stroke="#d6d6d6"/>
<path transform="translate(43.95 399.35)" d="M4.80 23.40 L14.60 12.90 L30.20 12.90 L20.50 23.40Z" fill="#0c4284"/>
<rect x="82.00" y="399.85" width="35" height="35" fill="#fff" stroke="#d6d6d6"/>
<path transform="translate(81.50 399.35)" d="M4.70 25.40 L12.10 10.30 L30.10 10.30 L22.90 25.40Z" fill="#0c4284"/>
<rect x="119.55" y="399.85" width="35" height="35" fill="#fff" stroke="#d6d6d6"/>
<path transform="translate(119.05 399.35)" d="M5.00 21.10 L10.90 14.80 L24.60 14.80 L30.40 21.10Z" fill="#0c4284"/>
<rect x="157.10" y="399.85" width="35" height="35" fill="#fff" stroke="#d6d6d6"/>
<path transform="translate(156.60 399.35)" d="M4.50 24.60 L10.40 11.30 L24.10 11.30 L30.50 24.60Z" fill="#0c4284"/>
<rect x="6.90" y="437.40" width="35" height="35" fill="#fff" stroke="#d6d6d6"/>
<path transform="translate(6.40 436.90)" d="M17.40 4.90 L25.20 13.30 L17.40 30.70 L10.20 13.30Z" fill="#0c4284"/>
<rect x="44.45" y="437.40" width="35" height="35" fill="#fff" stroke="#d6d6d6"/>
<path transform="translate(43.95 436.90)" d="M4.40 14.60 L17.50 8.80 L30.60 14.60 L17.50 26.75Z" fill="#0c4284"/>
<rect x="82.00" y="437.40" width="35" height="35" fill="#fff" stroke="#d6d6d6"/>
<path transform="translate(81.50 436.90)" d="M17.60 6.80 L30.10 29.30 L4.70 29.30Z" fill="#0c4284"/>
<rect x="119.55" y="437.40" width="35" height="35" fill="#fff" stroke="#d6d6d6"/>
<path transform="translate(119.05 436.90)" d="M15.25 7.61Q17.60 3.20 19.98 7.60L29.82 25.80Q32.20 30.20 27.20 30.20L8.20 30.20Q3.20 30.20 5.55 25.79Z" fill="#0c4284"/>
<rect x="157.10" y="437.40" width="35" height="35" fill="#fff" stroke="#d6d6d6"/>
<path transform="translate(156.60 436.90)" d="M13.52 8.66Q17.60 1.20 21.72 8.64L29.88 23.36Q34.00 30.80 25.50 30.80L9.90 30.80Q1.40 30.80 5.48 23.34Z" fill="#0c4284"/>
<rect x="6.90" y="474.95" width="35" height="35" fill="#fff" stroke="#d6d6d6"/>
<path transform="translate(6.40 474.45)" d="M17.4 5.9Q26.8 15 30.7 28.4Q17.5 30.8 4.3 28.4Q8 15 17.4 5.9Z" fill="#0c4284"/>
<rect x="44.45" y="474.95" width="35" height="35" fill="#fff" stroke="#d6d6d6"/>
<path transform="translate(43.95 474.45)" d="M4.80 30.40 L30.80 30.40 L30.80 5.00Z" fill="#0c4284"/>
<rect x="82.00" y="474.95" width="35" height="35" fill="#fff" stroke="#d6d6d6"/>
<path transform="translate(81.50 474.45)" d="M17.60 5.00 L26.80 30.40 L8.20 30.40Z" fill="#0c4284"/>
<rect x="119.55" y="474.95" width="35" height="35" fill="#fff" stroke="#d6d6d6"/>
<path transform="translate(119.05 474.45)" d="M5.00 25.50 L31.00 25.50 L31.00 10.20Z" fill="#0c4284"/>
<rect x="157.10" y="474.95" width="35" height="35" fill="#fff" stroke="#d6d6d6"/>
<path transform="translate(156.60 474.45)" d="M17.80 5.40 L30.90 15.70 L26.00 29.40 L9.40 29.40 L4.50 15.70Z" fill="#0c4284"/>
<rect x="6.90" y="512.50" width="35" height="35" fill="#fff" stroke="#d6d6d6"/>
<path transform="translate(6.40 512.00)" d="M4.30 4.80 L30.70 4.80 L30.70 18.50 L17.40 30.80 L4.30 18.50Z" fill="#0c4284"/>
<rect x="44.45" y="512.50" width="35" height="35" fill="#fff" stroke="#d6d6d6"/>
<path transform="translate(43.95 512.00)" d="M4.40 17.50 L10.70 6.80 L24.40 6.80 L30.80 17.50 L24.40 29.25 L10.70 29.25Z" fill="#0c4284"/>
<rect x="82.00" y="512.50" width="35" height="35" fill="#fff" stroke="#d6d6d6"/>
<path transform="translate(81.50 512.00)" d="M4.70 17.90 L10.20 11.70 L23.90 11.70 L30.10 17.90 L23.90 24.40 L10.20 24.40Z" fill="#0c4284"/>
<rect x="119.55" y="512.50" width="35" height="35" fill="#fff" stroke="#d6d6d6"/>
<path transform="translate(119.05 512.00)" d="M12.60 4.80 L23.40 4.80 L31.00 12.40 L31.00 23.20 L23.40 30.80 L12.60 30.80 L5.00 23.20 L5.00 12.40Z" fill="#0c4284"/>
<rect x="157.10" y="512.50" width="35" height="35" fill="#fff" stroke="#d6d6d6"/>
<path transform="translate(156.60 512.00)" d="M4.600000000000001 17.5a13.2 13.2 0 1 0 26.4 0a13.2 13.2 0 1 0 -26.4 0Z" fill="#0c4284"/>
<rect x="6.90" y="550.05" width="35" height="35" fill="#fff" stroke="#d6d6d6"/>
<path transform="translate(6.40 549.55)" d="M17.60 4.20 L20.28 7.48 L24.25 5.98 L24.94 10.16 L29.12 10.85 L27.62 14.82 L30.90 17.50 L27.62 20.18 L29.12 24.15 L24.94 24.84 L24.25 29.02 L20.28 27.52 L17.60 30.80 L14.92 27.52 L10.95 29.02 L10.26 24.84 L6.08 24.15 L7.58 20.18 L4.30 17.50 L7.58 14.82 L6.08 10.85 L10.26 10.16 L10.95 5.98 L14.92 7.48Z" fill="#0c4284"/>
<rect x="44.45" y="550.05" width="35" height="35" fill="#fff" stroke="#d6d6d6"/>
<path transform="translate(43.95 549.55)" d="M17.60 4.20 L19.19 6.44 L21.35 4.74 L22.24 7.34 L24.79 6.31 L24.92 9.06 L27.65 8.79 L27.00 11.46 L29.70 11.97 L28.32 14.35 L30.76 15.61 L28.77 17.50 L30.76 19.39 L28.32 20.65 L29.70 23.03 L27.00 23.54 L27.65 26.21 L24.92 25.94 L24.79 28.69 L22.24 27.66 L21.35 30.26 L19.19 28.56 L17.60 30.80 L16.01 28.56 L13.85 30.26 L12.96 27.66 L10.41 28.69 L10.28 25.94 L7.55 26.21 L8.20 23.54 L5.50 23.03 L6.88 20.65 L4.44 19.39 L6.43 17.50 L4.44 15.61 L6.88 14.35 L5.50 11.97 L8.20 11.46 L7.55 8.79 L10.28 9.06 L10.41 6.31 L12.96 7.34 L13.85 4.74 L16.01 6.44Z" fill="#0c4284"/>
<rect x="82.00" y="550.05" width="35" height="35" fill="#fff" stroke="#d6d6d6"/>
<path transform="translate(81.50 549.55)" d="M5.510000000000002 17.5a12.09 12.09 0 1 0 24.18 0a12.09 12.09 0 1 0 -24.18 0ZM27.40 17.50a2.0 2.0 0 1 0 4.0 0a2.0 2.0 0 1 0 -4.0 0ZM26.23 22.62a2.0 2.0 0 1 0 4.0 0a2.0 2.0 0 1 0 -4.0 0ZM22.96 26.73a2.0 2.0 0 1 0 4.0 0a2.0 2.0 0 1 0 -4.0 0ZM18.23 29.00a2.0 2.0 0 1 0 4.0 0a2.0 2.0 0 1 0 -4.0 0ZM12.97 29.00a2.0 2.0 0 1 0 4.0 0a2.0 2.0 0 1 0 -4.0 0ZM8.24 26.73a2.0 2.0 0 1 0 4.0 0a2.0 2.0 0 1 0 -4.0 0ZM4.97 22.62a2.0 2.0 0 1 0 4.0 0a2.0 2.0 0 1 0 -4.0 0ZM3.80 17.50a2.0 2.0 0 1 0 4.0 0a2.0 2.0 0 1 0 -4.0 0ZM4.97 12.38a2.0 2.0 0 1 0 4.0 0a2.0 2.0 0 1 0 -4.0 0ZM8.24 8.27a2.0 2.0 0 1 0 4.0 0a2.0 2.0 0 1 0 -4.0 0ZM12.97 6.00a2.0 2.0 0 1 0 4.0 0a2.0 2.0 0 1 0 -4.0 0ZM18.23 6.00a2.0 2.0 0 1 0 4.0 0a2.0 2.0 0 1 0 -4.0 0ZM22.96 8.27a2.0 2.0 0 1 0 4.0 0a2.0 2.0 0 1 0 -4.0 0ZM26.23 12.38a2.0 2.0 0 1 0 4.0 0a2.0 2.0 0 1 0 -4.0 0Z" fill="#0c4284"/>
<rect x="119.55" y="550.05" width="35" height="35" fill="#fff" stroke="#d6d6d6"/>
<path transform="translate(119.05 549.55)" d="M5.510000000000002 17.5a12.09 12.09 0 1 0 24.18 0a12.09 12.09 0 1 0 -24.18 0ZM28.36 17.50a1.4 1.4 0 1 0 2.8 0a1.4 1.4 0 1 0 -2.8 0ZM27.76 21.26a1.4 1.4 0 1 0 2.8 0a1.4 1.4 0 1 0 -2.8 0ZM26.04 24.65a1.4 1.4 0 1 0 2.8 0a1.4 1.4 0 1 0 -2.8 0ZM23.35 27.34a1.4 1.4 0 1 0 2.8 0a1.4 1.4 0 1 0 -2.8 0ZM19.96 29.06a1.4 1.4 0 1 0 2.8 0a1.4 1.4 0 1 0 -2.8 0ZM16.20 29.66a1.4 1.4 0 1 0 2.8 0a1.4 1.4 0 1 0 -2.8 0ZM12.44 29.06a1.4 1.4 0 1 0 2.8 0a1.4 1.4 0 1 0 -2.8 0ZM9.05 27.34a1.4 1.4 0 1 0 2.8 0a1.4 1.4 0 1 0 -2.8 0ZM6.36 24.65a1.4 1.4 0 1 0 2.8 0a1.4 1.4 0 1 0 -2.8 0ZM4.64 21.26a1.4 1.4 0 1 0 2.8 0a1.4 1.4 0 1 0 -2.8 0ZM4.04 17.50a1.4 1.4 0 1 0 2.8 0a1.4 1.4 0 1 0 -2.8 0ZM4.64 13.74a1.4 1.4 0 1 0 2.8 0a1.4 1.4 0 1 0 -2.8 0ZM6.36 10.35a1.4 1.4 0 1 0 2.8 0a1.4 1.4 0 1 0 -2.8 0ZM9.05 7.66a1.4 1.4 0 1 0 2.8 0a1.4 1.4 0 1 0 -2.8 0ZM12.44 5.94a1.4 1.4 0 1 0 2.8 0a1.4 1.4 0 1 0 -2.8 0ZM16.20 5.34a1.4 1.4 0 1 0 2.8 0a1.4 1.4 0 1 0 -2.8 0ZM19.96 5.94a1.4 1.4 0 1 0 2.8 0a1.4 1.4 0 1 0 -2.8 0ZM23.35 7.66a1.4 1.4 0 1 0 2.8 0a1.4 1.4 0 1 0 -2.8 0ZM26.04 10.35a1.4 1.4 0 1 0 2.8 0a1.4 1.4 0 1 0 -2.8 0ZM27.76 13.74a1.4 1.4 0 1 0 2.8 0a1.4 1.4 0 1 0 -2.8 0Z" fill="#0c4284"/>
<rect x="157.10" y="550.05" width="35" height="35" fill="#fff" stroke="#d6d6d6"/>
<path transform="translate(156.60 549.55)" d="M5.324000000000002 17.5a12.276 12.276 0 1 0 24.552 0a12.276 12.276 0 1 0 -24.552 0ZM26.96 17.50a2.4 2.4 0 1 0 4.8 0a2.4 2.4 0 1 0 -4.8 0ZM25.38 23.38a2.4 2.4 0 1 0 4.8 0a2.4 2.4 0 1 0 -4.8 0ZM21.08 27.68a2.4 2.4 0 1 0 4.8 0a2.4 2.4 0 1 0 -4.8 0ZM15.20 29.26a2.4 2.4 0 1 0 4.8 0a2.4 2.4 0 1 0 -4.8 0ZM9.32 27.68a2.4 2.4 0 1 0 4.8 0a2.4 2.4 0 1 0 -4.8 0ZM5.02 23.38a2.4 2.4 0 1 0 4.8 0a2.4 2.4 0 1 0 -4.8 0ZM3.44 17.50a2.4 2.4 0 1 0 4.8 0a2.4 2.4 0 1 0 -4.8 0ZM5.02 11.62a2.4 2.4 0 1 0 4.8 0a2.4 2.4 0 1 0 -4.8 0ZM9.32 7.32a2.4 2.4 0 1 0 4.8 0a2.4 2.4 0 1 0 -4.8 0ZM15.20 5.74a2.4 2.4 0 1 0 4.8 0a2.4 2.4 0 1 0 -4.8 0ZM21.08 7.32a2.4 2.4 0 1 0 4.8 0a2.4 2.4 0 1 0 -4.8 0ZM25.38 11.62a2.4 2.4 0 1 0 4.8 0a2.4 2.4 0 1 0 -4.8 0Z" fill="#0c4284"/>
<rect x="6.90" y="587.60" width="35" height="35" fill="#fff" stroke="#d6d6d6"/>
<path transform="translate(6.40 587.10)" d="M5.510000000000002 17.5a12.09 12.09 0 1 0 24.18 0a12.09 12.09 0 1 0 -24.18 0ZM28.52 17.50a1.3 1.3 0 1 0 2.6 0a1.3 1.3 0 1 0 -2.6 0ZM28.03 20.94a1.3 1.3 0 1 0 2.6 0a1.3 1.3 0 1 0 -2.6 0ZM26.58 24.11a1.3 1.3 0 1 0 2.6 0a1.3 1.3 0 1 0 -2.6 0ZM24.30 26.74a1.3 1.3 0 1 0 2.6 0a1.3 1.3 0 1 0 -2.6 0ZM21.38 28.62a1.3 1.3 0 1 0 2.6 0a1.3 1.3 0 1 0 -2.6 0ZM18.04 29.60a1.3 1.3 0 1 0 2.6 0a1.3 1.3 0 1 0 -2.6 0ZM14.56 29.60a1.3 1.3 0 1 0 2.6 0a1.3 1.3 0 1 0 -2.6 0ZM11.22 28.62a1.3 1.3 0 1 0 2.6 0a1.3 1.3 0 1 0 -2.6 0ZM8.30 26.74a1.3 1.3 0 1 0 2.6 0a1.3 1.3 0 1 0 -2.6 0ZM6.02 24.11a1.3 1.3 0 1 0 2.6 0a1.3 1.3 0 1 0 -2.6 0ZM4.57 20.94a1.3 1.3 0 1 0 2.6 0a1.3 1.3 0 1 0 -2.6 0ZM4.08 17.50a1.3 1.3 0 1 0 2.6 0a1.3 1.3 0 1 0 -2.6 0ZM4.57 14.06a1.3 1.3 0 1 0 2.6 0a1.3 1.3 0 1 0 -2.6 0ZM6.02 10.89a1.3 1.3 0 1 0 2.6 0a1.3 1.3 0 1 0 -2.6 0ZM8.30 8.26a1.3 1.3 0 1 0 2.6 0a1.3 1.3 0 1 0 -2.6 0ZM11.22 6.38a1.3 1.3 0 1 0 2.6 0a1.3 1.3 0 1 0 -2.6 0ZM14.56 5.40a1.3 1.3 0 1 0 2.6 0a1.3 1.3 0 1 0 -2.6 0ZM18.04 5.40a1.3 1.3 0 1 0 2.6 0a1.3 1.3 0 1 0 -2.6 0ZM21.38 6.38a1.3 1.3 0 1 0 2.6 0a1.3 1.3 0 1 0 -2.6 0ZM24.30 8.26a1.3 1.3 0 1 0 2.6 0a1.3 1.3 0 1 0 -2.6 0ZM26.58 10.89a1.3 1.3 0 1 0 2.6 0a1.3 1.3 0 1 0 -2.6 0ZM28.03 14.06a1.3 1.3 0 1 0 2.6 0a1.3 1.3 0 1 0 -2.6 0Z" fill="#0c4284"/>
<rect x="44.45" y="587.60" width="35" height="35" fill="#fff" stroke="#d6d6d6"/>
<path transform="translate(43.95 587.10)" d="M17.5 17.5L25.62 7.47A12.9 12.9 0 1 1 9.38 7.47Z" fill="#0c4284"/>
<rect x="82.00" y="587.60" width="35" height="35" fill="#fff" stroke="#d6d6d6"/>
<path transform="translate(81.50 587.10)" d="M17.4 16.2L28.00 8.50A13.1 13.1 0 1 1 6.80 8.50Z" fill="#0c4284"/>
<rect x="119.55" y="587.60" width="35" height="35" fill="#fff" stroke="#d6d6d6"/>
<path transform="translate(119.05 587.10)" d="M17.7 14.6L29.65 8.77A13.3 13.3 0 1 1 5.75 8.77Z" fill="#0c4284"/>
<rect x="157.10" y="587.60" width="35" height="35" fill="#fff" stroke="#d6d6d6"/>
<path transform="translate(156.60 587.10)" d="M4.5 24.4A13 12.7 0 0 1 30.5 24.4Z" fill="#0c4284"/>
<rect x="6.90" y="625.15" width="35" height="35" fill="#fff" stroke="#d6d6d6"/>
<path transform="translate(6.40 624.65)" d="M17.4 25.3L30.43 17.47A15.2 15.2 0 0 0 4.37 17.47Z" fill="#0c4284"/>
<rect x="44.45" y="625.15" width="35" height="35" fill="#fff" stroke="#d6d6d6"/>
<path transform="translate(43.95 624.65)" d="M4.4 30.7L30.40 30.70A26 26 0 0 0 4.40 4.70Z" fill="#0c4284"/>
<rect x="82.00" y="625.15" width="35" height="35" fill="#fff" stroke="#d6d6d6"/>
<path transform="translate(81.50 624.65)" d="M4.7 29.2L30.70 29.20A26 26 0 0 0 17.70 6.68Z" fill="#0c4284"/>
<rect x="119.55" y="625.15" width="35" height="35" fill="#fff" stroke="#d6d6d6"/>
<path transform="translate(119.05 624.65)" d="M4.699999999999999 17.5a13 9.8 0 1 0 26 0a13 9.8 0 1 0 -26 0Z" fill="#0c4284"/>
<rect x="157.10" y="625.15" width="35" height="35" fill="#fff" stroke="#d6d6d6"/>
<path transform="translate(156.60 624.65)" d="M17.80 7.50 L19.83 9.65 L22.77 8.26 L23.58 10.85 L26.99 10.43 L26.45 13.06 L29.81 13.67 L28.00 15.94 L30.80 17.50 L28.00 19.06 L29.81 21.33 L26.45 21.94 L26.99 24.57 L23.58 24.15 L22.77 26.74 L19.83 25.35 L17.80 27.50 L15.77 25.35 L12.83 26.74 L12.02 24.15 L8.61 24.57 L9.15 21.94 L5.79 21.33 L7.60 19.06 L4.80 17.50 L7.60 15.94 L5.79 13.67 L9.15 13.06 L8.61 10.43 L12.02 10.85 L12.83 8.26 L15.77 9.65Z" fill="#0c4284"/>
<rect x="6.90" y="662.70" width="35" height="35" fill="#fff" stroke="#d6d6d6"/>
<path transform="translate(6.40 662.20)" d="M17.60 7.00 L19.21 8.67 L21.35 7.43 L22.30 9.38 L24.79 8.67 L25.00 10.75 L27.65 10.62 L27.11 12.67 L29.70 13.14 L28.45 14.99 L30.76 16.01 L28.91 17.50 L30.76 18.99 L28.45 20.01 L29.70 21.86 L27.11 22.33 L27.65 24.38 L25.00 24.25 L24.79 26.33 L22.30 25.62 L21.35 27.57 L19.21 26.33 L17.60 28.00 L15.99 26.33 L13.85 27.57 L12.90 25.62 L10.41 26.33 L10.20 24.25 L7.55 24.38 L8.09 22.33 L5.50 21.86 L6.75 20.01 L4.44 18.99 L6.30 17.50 L4.44 16.01 L6.75 14.99 L5.50 13.14 L8.09 12.67 L7.55 10.62 L10.20 10.75 L10.41 8.67 L12.90 9.38 L13.85 7.43 L15.99 8.67Z" fill="#0c4284"/>
<rect x="44.45" y="662.70" width="35" height="35" fill="#fff" stroke="#d6d6d6"/>
<path transform="translate(43.95 662.20)" d="M5.510000000000002 17.5a12.09 9.3 0 1 0 24.18 0a12.09 9.3 0 1 0 -24.18 0ZM27.40 17.50a2.0 2.0 0 1 0 4.0 0a2.0 2.0 0 1 0 -4.0 0ZM26.23 21.32a2.0 2.0 0 1 0 4.0 0a2.0 2.0 0 1 0 -4.0 0ZM22.96 24.38a2.0 2.0 0 1 0 4.0 0a2.0 2.0 0 1 0 -4.0 0ZM18.23 26.08a2.0 2.0 0 1 0 4.0 0a2.0 2.0 0 1 0 -4.0 0ZM12.97 26.08a2.0 2.0 0 1 0 4.0 0a2.0 2.0 0 1 0 -4.0 0ZM8.24 24.38a2.0 2.0 0 1 0 4.0 0a2.0 2.0 0 1 0 -4.0 0ZM4.97 21.32a2.0 2.0 0 1 0 4.0 0a2.0 2.0 0 1 0 -4.0 0ZM3.80 17.50a2.0 2.0 0 1 0 4.0 0a2.0 2.0 0 1 0 -4.0 0ZM4.97 13.68a2.0 2.0 0 1 0 4.0 0a2.0 2.0 0 1 0 -4.0 0ZM8.24 10.62a2.0 2.0 0 1 0 4.0 0a2.0 2.0 0 1 0 -4.0 0ZM12.97 8.92a2.0 2.0 0 1 0 4.0 0a2.0 2.0 0 1 0 -4.0 0ZM18.23 8.92a2.0 2.0 0 1 0 4.0 0a2.0 2.0 0 1 0 -4.0 0ZM22.96 10.62a2.0 2.0 0 1 0 4.0 0a2.0 2.0 0 1 0 -4.0 0ZM26.23 13.68a2.0 2.0 0 1 0 4.0 0a2.0 2.0 0 1 0 -4.0 0Z" fill="#0c4284"/>
<rect x="82.00" y="662.70" width="35" height="35" fill="#fff" stroke="#d6d6d6"/>
<path transform="translate(81.50 662.20)" d="M5.510000000000002 17.5a12.09 9.3 0 1 0 24.18 0a12.09 9.3 0 1 0 -24.18 0ZM28.36 17.50a1.4 1.4 0 1 0 2.8 0a1.4 1.4 0 1 0 -2.8 0ZM27.76 20.33a1.4 1.4 0 1 0 2.8 0a1.4 1.4 0 1 0 -2.8 0ZM26.04 22.88a1.4 1.4 0 1 0 2.8 0a1.4 1.4 0 1 0 -2.8 0ZM23.35 24.91a1.4 1.4 0 1 0 2.8 0a1.4 1.4 0 1 0 -2.8 0ZM19.96 26.21a1.4 1.4 0 1 0 2.8 0a1.4 1.4 0 1 0 -2.8 0ZM16.20 26.66a1.4 1.4 0 1 0 2.8 0a1.4 1.4 0 1 0 -2.8 0ZM12.44 26.21a1.4 1.4 0 1 0 2.8 0a1.4 1.4 0 1 0 -2.8 0ZM9.05 24.91a1.4 1.4 0 1 0 2.8 0a1.4 1.4 0 1 0 -2.8 0ZM6.36 22.88a1.4 1.4 0 1 0 2.8 0a1.4 1.4 0 1 0 -2.8 0ZM4.64 20.33a1.4 1.4 0 1 0 2.8 0a1.4 1.4 0 1 0 -2.8 0ZM4.04 17.50a1.4 1.4 0 1 0 2.8 0a1.4 1.4 0 1 0 -2.8 0ZM4.64 14.67a1.4 1.4 0 1 0 2.8 0a1.4 1.4 0 1 0 -2.8 0ZM6.36 12.12a1.4 1.4 0 1 0 2.8 0a1.4 1.4 0 1 0 -2.8 0ZM9.05 10.09a1.4 1.4 0 1 0 2.8 0a1.4 1.4 0 1 0 -2.8 0ZM12.44 8.79a1.4 1.4 0 1 0 2.8 0a1.4 1.4 0 1 0 -2.8 0ZM16.20 8.34a1.4 1.4 0 1 0 2.8 0a1.4 1.4 0 1 0 -2.8 0ZM19.96 8.79a1.4 1.4 0 1 0 2.8 0a1.4 1.4 0 1 0 -2.8 0ZM23.35 10.09a1.4 1.4 0 1 0 2.8 0a1.4 1.4 0 1 0 -2.8 0ZM26.04 12.12a1.4 1.4 0 1 0 2.8 0a1.4 1.4 0 1 0 -2.8 0ZM27.76 14.67a1.4 1.4 0 1 0 2.8 0a1.4 1.4 0 1 0 -2.8 0Z" fill="#0c4284"/>
<rect x="119.55" y="662.70" width="35" height="35" fill="#fff" stroke="#d6d6d6"/>
<path transform="translate(119.05 662.20)" d="M5.510000000000002 17.5a12.09 9.3 0 1 0 24.18 0a12.09 9.3 0 1 0 -24.18 0ZM27.08 17.50a2.2 2.2 0 1 0 4.4 0a2.2 2.2 0 1 0 -4.4 0ZM25.52 21.84a2.2 2.2 0 1 0 4.4 0a2.2 2.2 0 1 0 -4.4 0ZM21.24 25.02a2.2 2.2 0 1 0 4.4 0a2.2 2.2 0 1 0 -4.4 0ZM15.40 26.18a2.2 2.2 0 1 0 4.4 0a2.2 2.2 0 1 0 -4.4 0ZM9.56 25.02a2.2 2.2 0 1 0 4.4 0a2.2 2.2 0 1 0 -4.4 0ZM5.28 21.84a2.2 2.2 0 1 0 4.4 0a2.2 2.2 0 1 0 -4.4 0ZM3.72 17.50a2.2 2.2 0 1 0 4.4 0a2.2 2.2 0 1 0 -4.4 0ZM5.28 13.16a2.2 2.2 0 1 0 4.4 0a2.2 2.2 0 1 0 -4.4 0ZM9.56 9.98a2.2 2.2 0 1 0 4.4 0a2.2 2.2 0 1 0 -4.4 0ZM15.40 8.82a2.2 2.2 0 1 0 4.4 0a2.2 2.2 0 1 0 -4.4 0ZM21.24 9.98a2.2 2.2 0 1 0 4.4 0a2.2 2.2 0 1 0 -4.4 0ZM25.52 13.16a2.2 2.2 0 1 0 4.4 0a2.2 2.2 0 1 0 -4.4 0Z" fill="#0c4284"/>
<rect x="157.10" y="662.70" width="35" height="35" fill="#fff" stroke="#d6d6d6"/>
<path transform="translate(156.60 662.20)" d="M5.510000000000002 17.5a12.09 9.3 0 1 0 24.18 0a12.09 9.3 0 1 0 -24.18 0ZM28.68 17.50a1.2 1.2 0 1 0 2.4 0a1.2 1.2 0 1 0 -2.4 0ZM28.18 20.11a1.2 1.2 0 1 0 2.4 0a1.2 1.2 0 1 0 -2.4 0ZM26.73 22.52a1.2 1.2 0 1 0 2.4 0a1.2 1.2 0 1 0 -2.4 0ZM24.44 24.51a1.2 1.2 0 1 0 2.4 0a1.2 1.2 0 1 0 -2.4 0ZM21.50 25.94a1.2 1.2 0 1 0 2.4 0a1.2 1.2 0 1 0 -2.4 0ZM18.15 26.69a1.2 1.2 0 1 0 2.4 0a1.2 1.2 0 1 0 -2.4 0ZM14.65 26.69a1.2 1.2 0 1 0 2.4 0a1.2 1.2 0 1 0 -2.4 0ZM11.30 25.94a1.2 1.2 0 1 0 2.4 0a1.2 1.2 0 1 0 -2.4 0ZM8.36 24.51a1.2 1.2 0 1 0 2.4 0a1.2 1.2 0 1 0 -2.4 0ZM6.07 22.52a1.2 1.2 0 1 0 2.4 0a1.2 1.2 0 1 0 -2.4 0ZM4.62 20.11a1.2 1.2 0 1 0 2.4 0a1.2 1.2 0 1 0 -2.4 0ZM4.12 17.50a1.2 1.2 0 1 0 2.4 0a1.2 1.2 0 1 0 -2.4 0ZM4.62 14.89a1.2 1.2 0 1 0 2.4 0a1.2 1.2 0 1 0 -2.4 0ZM6.07 12.48a1.2 1.2 0 1 0 2.4 0a1.2 1.2 0 1 0 -2.4 0ZM8.36 10.49a1.2 1.2 0 1 0 2.4 0a1.2 1.2 0 1 0 -2.4 0ZM11.30 9.06a1.2 1.2 0 1 0 2.4 0a1.2 1.2 0 1 0 -2.4 0ZM14.65 8.31a1.2 1.2 0 1 0 2.4 0a1.2 1.2 0 1 0 -2.4 0ZM18.15 8.31a1.2 1.2 0 1 0 2.4 0a1.2 1.2 0 1 0 -2.4 0ZM21.50 9.06a1.2 1.2 0 1 0 2.4 0a1.2 1.2 0 1 0 -2.4 0ZM24.44 10.49a1.2 1.2 0 1 0 2.4 0a1.2 1.2 0 1 0 -2.4 0ZM26.73 12.48a1.2 1.2 0 1 0 2.4 0a1.2 1.2 0 1 0 -2.4 0ZM28.18 14.89a1.2 1.2 0 1 0 2.4 0a1.2 1.2 0 1 0 -2.4 0Z" fill="#0c4284"/>
<rect x="205.5" y="211" width="13" height="472" fill="#f0f0f0"/>
<rect x="205.5" y="225" width="13" height="319" fill="#c9c9c9"/>
<path d="M208.5 221L212 217.5 215.5 221" stroke="#555" stroke-width="1.3" fill="none"/>
</svg>
<!-- header -->
<svg class="a" style="left:0;top:0" width="1024" height="49" viewBox="0 0 1024 49">
 <g transform="translate(22.8 19.3)"><path d="M0 0L-6.00 -10.39L2.72 -10.14Z" fill="#4f6fe6"/><circle cx="-5.70" cy="-9.87" r="0.9" fill="#3a3a70" opacity="0.7"/><path d="M0 0L3.11 -11.59L9.09 -5.25Z" fill="#45c3d3"/><circle cx="2.95" cy="-11.01" r="0.9" fill="#3a3a70" opacity="0.7"/><path d="M0 0L10.39 -6.00L10.14 2.72Z" fill="#f4c048"/><circle cx="9.87" cy="-5.70" r="0.9" fill="#3a3a70" opacity="0.7"/><path d="M0 0L11.59 3.11L5.25 9.09Z" fill="#e873b2"/><circle cx="11.01" cy="2.95" r="0.9" fill="#3a3a70" opacity="0.7"/><path d="M0 0L6.00 10.39L-2.72 10.14Z" fill="#4f6fe6"/><circle cx="5.70" cy="9.87" r="0.9" fill="#3a3a70" opacity="0.7"/><path d="M0 0L-3.11 11.59L-9.09 5.25Z" fill="#45c3d3"/><circle cx="-2.95" cy="11.01" r="0.9" fill="#3a3a70" opacity="0.7"/><path d="M0 0L-10.39 6.00L-10.14 -2.72Z" fill="#f4c048"/><circle cx="-9.87" cy="5.70" r="0.9" fill="#3a3a70" opacity="0.7"/><path d="M0 0L-11.59 -3.11L-5.25 -9.09Z" fill="#e873b2"/><circle cx="-11.01" cy="-2.95" r="0.9" fill="#3a3a70" opacity="0.7"/><circle r="1.3" fill="#fff"/></g>
</svg>
<div class="t" style="left:41px;top:10.5px;font-size:17px;color:#646464;letter-spacing:-0.45px">CanvasWorkspace</div>
<svg class="a" style="left:180px;top:0" width="70" height="18" viewBox="180 0 70 18">
 <circle cx="189.8" cy="9" r="5" fill="#f06ab8"/><circle cx="189.8" cy="9" r="1.6" fill="#d0208a"/>
 <path d="M198.5 14L203 3.8L207.5 14Z" fill="#f2b526"/><path d="M200 10.5H206M201 8H205" stroke="#fff" stroke-width="0.9"/>
 <path d="M216 14C211 10 210.5 8.5 211 6.5C211.7 4 214.5 3.8 216 6.2C217.5 3.8 220.3 4 221 6.5C221.5 8.5 221 10 216 14Z" fill="#79aef0"/>
 <rect x="226.5" y="4" width="7.5" height="8" fill="none" stroke="#6a6af0" stroke-width="0.9"/><rect x="224" y="6.5" width="8" height="7.5" fill="#3e4fe0"/>
 <path d="M237 6L239.5 9L241.8 4L244 9L246.5 6L245.5 12H238Z" fill="#6b3fd6"/><rect x="238" y="13" width="7.5" height="1.2" fill="#6b3fd6"/>
</svg>
<div class="tab" style="left:225px;width:63px">Projekt</div>
<div class="tab" style="left:289px;width:78px">Bearbeiten</div>
<div class="tab" style="left:369px;width:62px">Ansicht</div>
<div class="tab" style="left:433px;width:68px">Premium</div>
<!-- toolbar -->
<div class="a" style="left:0;top:48px;width:1024px;height:39px;background:#fff;border-top:1px solid #e0e0e0;border-bottom:1px solid #d2d2d2"></div>
<div class="a" style="left:4px;top:59px;width:81px;height:20px;border:1px solid #bfbfbf;background:#fff"></div>
<div class="t" style="left:7px;top:63px;font-size:10.8px;color:#7a7a7a">Projekttitel</div>
<svg class="a" style="left:0;top:49px" width="600" height="38" viewBox="0 49 600 38">
 <!-- grid plus -->
 <g stroke="#3a3a58" fill="none" stroke-width="1.2"><rect x="98.6" y="63.3" width="12.8" height="12.8"/><path d="M105 63.3V76.1M98.6 69.7H111.4"/></g><g fill="#b8b8c4"><rect x="100.5" y="65.2" width="3" height="3"/><rect x="106.5" y="71.2" width="3" height="3"/><rect x="100.5" y="71.2" width="3" height="3"/><rect x="106.5" y="65.2" width="3" height="3"/></g>
 <circle cx="111.5" cy="63.8" r="4.8" fill="#3a3a58" stroke="#fff" stroke-width="0.8"/><path d="M111.5 61.3V66.3M109 63.8H114" stroke="#fff" stroke-width="1.4"/>
 <!-- import -->
 <path d="M137.5 59.5H142.5V64.5H145.5L140 70L134.5 64.5H137.5Z" fill="#3a3a58"/>
 <path d="M134.5 66.5H136L140 70.8L144 66.5H145.6L146.6 70.5V76.6H133V70.5Z" fill="#3a3a58"/>
 <rect x="133" y="71" width="13.6" height="1.3" fill="#fff"/>
 <!-- scan -->
 <path d="M168 63.5L178.5 59.5V62.5" stroke="#3a3a58" stroke-width="1.1" fill="none"/><path d="M168 62.8H178" stroke="#3a3a58" stroke-width="0.8"/>
 <rect x="164.4" y="64.6" width="17.6" height="1.4" fill="#3a3a58"/>
 <rect x="166.3" y="66" width="13.7" height="10.6" fill="#3a3a58"/>
 <path d="M169.5 75C171 72 173 70.5 175 70" stroke="#fff" stroke-width="1.2" fill="none"/><path d="M168.5 67.5H178.5L175.5 72.5Z" fill="#fff"/>
 <!-- svg -->
 <path d="M198 59.9H211V76.1H198Z" fill="#fff" stroke="#5a5a6a" stroke-width="1.1"/>
 <rect x="200.7" y="64.1" width="14.5" height="7.4" fill="#3a3a50"/>
 <text x="208" y="70.6" font-size="6.8" font-weight="bold" fill="#fff" text-anchor="middle" font-family="Liberation Sans">SVG</text>
 <!-- cursor -->
 <circle cx="234.5" cy="62.8" r="3.7" fill="#b30de6"/>
 <path d="M236 65L246 67.8L242.6 69.4L247.8 74.6L245.8 76.4L240.7 71.2L239 74.8Z" fill="#b30de6"/>
 <!-- polyline -->
 <path d="M265.3 72L270.2 63.6L275 72L280.8 64.6" stroke="#4a4a5a" stroke-width="1.2" fill="none"/>
 <g fill="#fff" stroke="#4a4a5a" stroke-width="1"><circle cx="265.3" cy="72" r="1.6"/><circle cx="270.2" cy="63.6" r="1.6"/><circle cx="275" cy="72" r="1.6"/></g>
 <!-- freehand -->
 <path d="M297.5 60C303 59.5 307 61 305.5 64.5C304 67.5 300 69 301 72.5C301.8 75.5 304.5 76 307.5 76" stroke="#3a3a50" stroke-width="1.5" fill="none"/>
 <path d="M311.2 59.8L314.6 60.6L311.2 74L309.5 76.5L309 73.5Z" fill="#2b3a70"/>
 <!-- undo -->
 <path d="M346.5 73C347.5 66.5 343 62.5 338.5 63C336.2 63.3 335 64.5 334 65.8" stroke="#2a3050" stroke-width="2.6" fill="none"/>
 <path d="M330.8 62.8L331 74.2L340 70.5Z" fill="#2a3050"/>
 <!-- redo -->
 <path d="M363.5 73C362.5 66.5 367 62.5 371.5 63C373.8 63.3 375 64.5 376 65.8" stroke="#c9ced6" stroke-width="2.6" fill="none"/>
 <path d="M379.2 62.8L379 74.2L370 70.5Z" fill="#c9ced6"/>
 <!-- trash -->
 <g stroke="#d3d7dd" fill="none" stroke-width="1.3"><path d="M396 61.5H414M401.5 61.5V59.6H408.5V61.5"/><path d="M398 62.5L399.5 76H410.5L412 62.5"/><path d="M402 64.5V74M405 64.5V74M408 64.5V74"/></g>
 <!-- list -->
 <rect x="430.4" y="61.8" width="15.8" height="12.4" fill="none" stroke="#4a4a5a" stroke-width="1.5"/>
 <path d="M433 65.5H443.6M433 68H443.6M433 70.6H443.6" stroke="#3a3a4a" stroke-width="1.1"/>
 <!-- zoom input -->
 <rect x="468.9" y="58.9" width="45.2" height="19" fill="#fff" stroke="#c6c6c6"/>
 <path d="M504 65.4L508.5 61.1L513 65.4Z" fill="#8a8a8a"/><path d="M504 70.8L508.5 75.4L513 70.8Z" fill="#8a8a8a"/>
 <text x="471" y="74" font-size="12.2" fill="#222" font-family="Liberation Sans">105</text>
 <text x="517.5" y="75.5" font-size="12" fill="#444" font-family="Liberation Sans">%</text>
 <circle cx="542.3" cy="65.6" r="4.6" fill="none" stroke="#333" stroke-width="2.1"/>
 <path d="M545.6 69L551.5 74.9" stroke="#333" stroke-width="2.4"/>
</svg>
<!-- sidebar -->
<div class="a" style="left:226px;top:87px;width:1px;height:596px;background:#c8c8c8"></div>
<div class="a" style="left:15.5px;top:123px;width:194.5px;height:41px;background:#6b4fe7;border-radius:2px"></div>
<svg class="a" style="left:40px;top:130px" width="35" height="30" viewBox="40 130 35 30">
 <path d="M54.5 132.6H60.3V140.8H66.3L57.4 151.8L48.5 140.8H54.5Z" fill="#fff"/>
 <path d="M43.6 150L46.3 154.5H68.3L71 150" stroke="#fff" stroke-width="1.4" fill="none"/>
</svg>
<div class="t" style="left:77px;top:134.5px;font-size:16.6px;color:#fff">Herunterladen</div>
<div class="t" style="left:5px;top:188.3px;font-size:12.5px;font-weight:bold;color:#2e2e2e">Einfach</div>
<svg class="a" style="left:185px;top:183px" width="30" height="24" viewBox="185 183 30 24">
 <path d="M196 191.3H204.5A5.45 5.45 0 0 1 204.5 202.2H193.2" stroke="#2c2f48" stroke-width="2.1" fill="none"/>
 <path d="M190.3 191.2L196.8 187.2V195.4Z" fill="#2c2f48"/>
</svg>
<!-- collapse tab -->
<div class="a" style="left:226px;top:383px;width:20px;height:48px;background:#fff;border:1px solid #cfcfcf;border-left:none;box-shadow:1px 1px 2px rgba(0,0,0,0.12)"></div>
<svg class="a" style="left:226px;top:383px" width="20" height="48" viewBox="226 383 20 48">
 <path d="M239 396.5L231.5 405.8L239 415.2" stroke="#2c2f48" stroke-width="1.5" fill="none"/>
</svg>
<!-- popup -->
<div class="a" style="left:226px;top:86px;width:217px;height:69px;background:#fff;border:1px solid #cdcdcd;border-top-color:#d8d8d8"></div>
<div class="a" style="left:230.5px;top:96.5px;width:74px;height:24px;border:1px solid #cacaca;border-radius:2px;background:#fff"></div>
<div class="t" style="left:243.5px;top:103px;font-size:10.5px;color:#4b4b6b">Kurve</div>
<svg class="a" style="left:226px;top:86px" width="217" height="69" viewBox="226 86 217 69">
 <path d="M290.2 108L295.3 108L292.75 110.8Z" fill="#555"/>
 <rect x="305.5" y="133.5" width="15" height="14.5" fill="#fff" stroke="#bdbdbd"/>
 <!-- curve magenta -->
 <g stroke="#c000e8" fill="none" stroke-width="1.1">
  <path d="M318.5 114.5C318.5 110 320 106.5 322.1 104.8C324 103 326 101.5 331.8 102"/>
  <path d="M316 110.2L322.1 104.8L327.5 99.4"/>
  <circle cx="316" cy="110.2" r="1.5" fill="#fff"/><circle cx="327.5" cy="99.4" r="1.5" fill="#fff"/>
 </g>
 <circle cx="322.1" cy="104.8" r="2" fill="#c000e8"/>
 <!-- add node -->
 <g stroke="#3a3a50" fill="none" stroke-width="1.1">
  <path d="M352.5 114.5C352.5 110 353.8 106.5 355.6 104.5C357.5 102.8 360 101.8 364.8 102.3"/>
  <path d="M349.7 110.1L355.6 104.5L360.3 98.9"/>
  <path d="M348.8 101.2H353.8M351.3 98.7V103.7"/>
  <circle cx="349.7" cy="110.1" r="1.4" fill="#fff"/><circle cx="360.3" cy="98.9" r="1.4" fill="#fff"/>
 </g>
 <circle cx="355.6" cy="104.5" r="2" fill="#3a3a50"/>
 <!-- remove node -->
 <g stroke="#3a3a50" fill="none" stroke-width="1.1" transform="translate(33 0)">
  <path d="M352.5 114.5C352.5 110 353.8 106.5 355.6 104.5C357.5 102.8 360 101.8 364.8 102.3"/>
  <path d="M349.7 110.1L355.6 104.5L360.3 98.9"/>
  <path d="M348.8 101.2H353.8"/>
  <circle cx="349.7" cy="110.1" r="1.4" fill="#fff"/><circle cx="360.3" cy="98.9" r="1.4" fill="#fff"/>
 </g>
 <circle cx="388.6" cy="104.5" r="2" fill="#3a3a50"/>
 <!-- corner -->
 <path d="M416.3 111.8L422.4 102M423.6 102L429.4 111.8" stroke="#3a3a50" stroke-width="1.3" fill="none"/>
 <circle cx="423" cy="100.6" r="1.9" fill="#fff" stroke="#3a3a50" stroke-width="1.1"/>
 <circle cx="429.4" cy="111.8" r="2.1" fill="#3a3a50"/>
</svg>
<div class="t" style="left:326px;top:134.5px;font-size:10.1px;color:#555">Ziehpunkte verbergen</div>
</body></html>
